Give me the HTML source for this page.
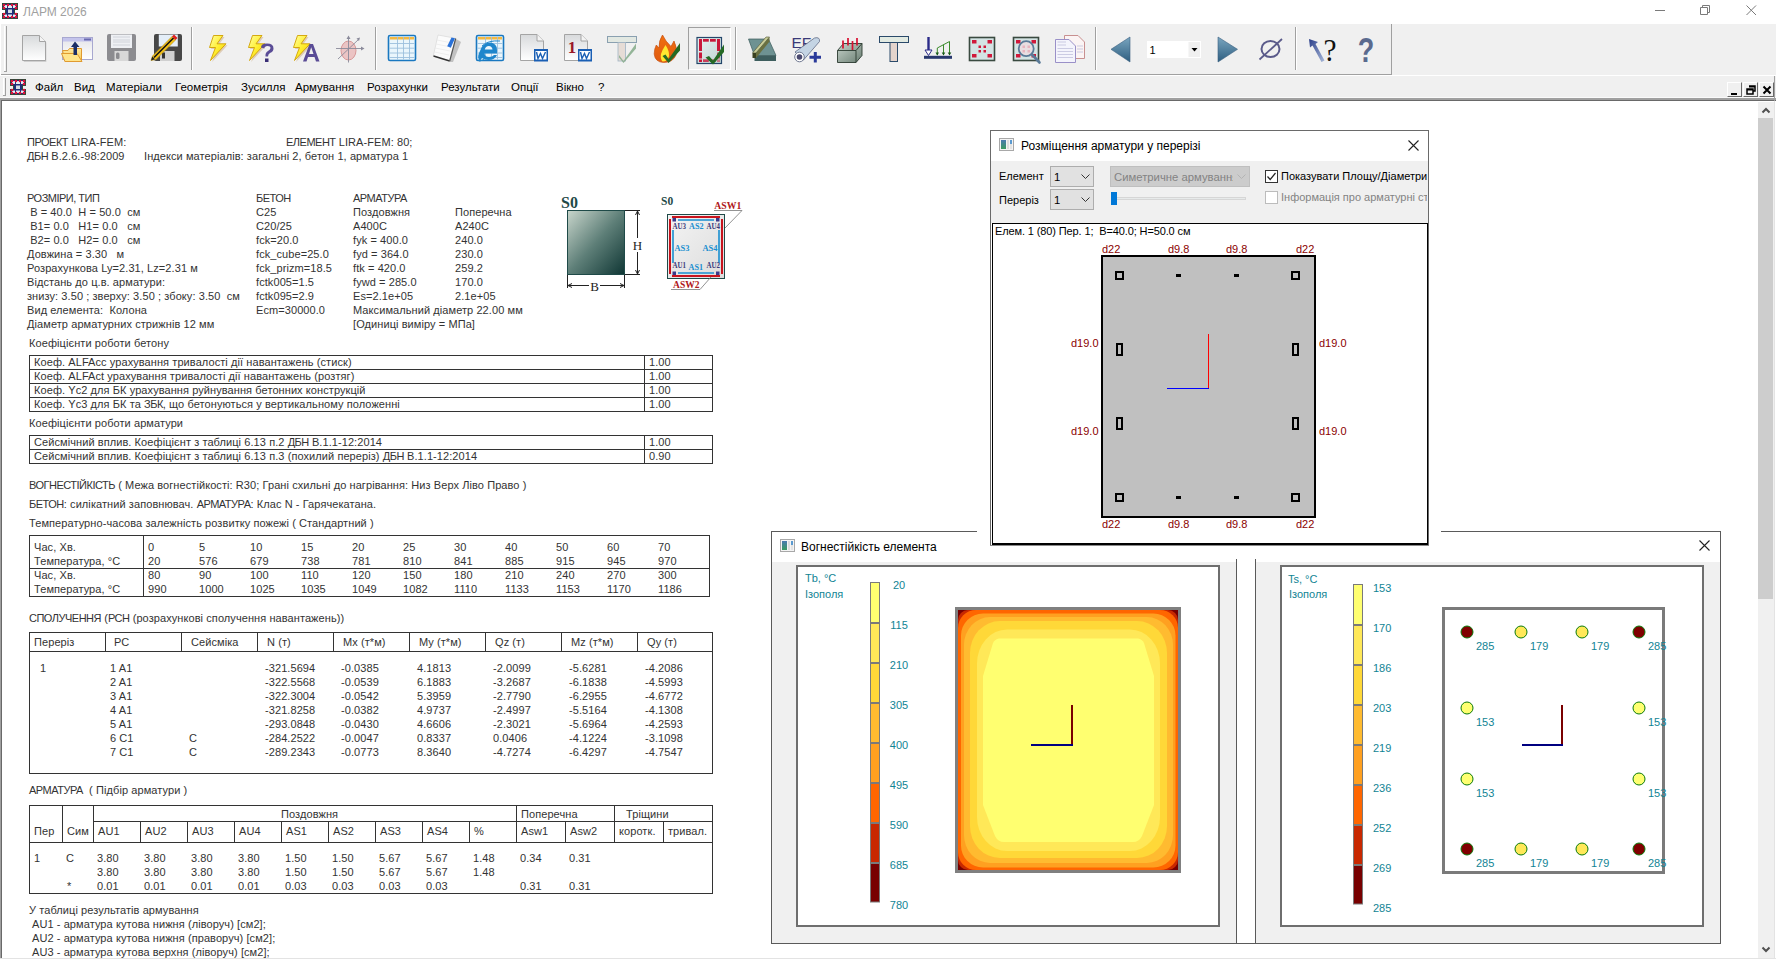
<!DOCTYPE html><html><head><meta charset="utf-8"><style>
html,body{margin:0;padding:0}
body{width:1776px;height:960px;position:relative;overflow:hidden;background:#fff;font-family:"Liberation Sans",sans-serif}
.a{position:absolute}
.t{position:absolute;white-space:pre}
svg{position:absolute;overflow:visible}
</style></head><body>
<div class="a" style="left:0px;top:0px;width:1776px;height:24px;background:#fff"></div>
<svg style="left:2px;top:3px" width="16" height="16" viewBox="0 0 16 16">
<path d="M0 0 H16 V7 H13 V10 H16 V16 H0 V10 H3 V7 H0 Z" fill="#2f4a3a"/>
<path d="M1 1 H15 V6 H12 V11 H15 V15 H1 V11 H4 V6 H1 Z" fill="#1e2f7a"/>
<g fill="#e6eef4"><rect x="2" y="2" width="3" height="3"/><rect x="6" y="2" width="4" height="3"/><rect x="11" y="2" width="3" height="3"/>
<rect x="6" y="6.5" width="4" height="3.5" fill="#d6dee6"/>
<rect x="2" y="11.5" width="3" height="2.5"/><rect x="6" y="11.5" width="4" height="2.5"/><rect x="11" y="11.5" width="3" height="2.5"/></g>
<g fill="#e0103a"><circle cx="2" cy="2" r="1.3"/><circle cx="6" cy="2" r="1.3"/><circle cx="10" cy="2" r="1.3"/><circle cx="14" cy="2" r="1.3"/>
<circle cx="2" cy="5" r="1.3"/><circle cx="14" cy="5" r="1.3"/><circle cx="2" cy="11" r="1.3"/><circle cx="14" cy="11" r="1.3"/>
<circle cx="2" cy="14" r="1.3"/><circle cx="6" cy="14" r="1.3"/><circle cx="10" cy="14" r="1.3"/><circle cx="14" cy="14" r="1.3"/></g>
</svg>
<div class="t" style="left:23px;top:6px;font-size:12px;line-height:12px;color:#a0a0a0;font-weight:normal;font-family:'Liberation Sans';">ЛАРМ 2026</div>
<div class="a" style="left:1655px;top:10px;width:10px;height:1px;background:#7a7a7a"></div>
<svg style="left:1700px;top:5px" width="11" height="11"><path d="M2.5 2.5 V0.5 H9.5 V7.5 H7.5 M0.5 2.5 H7.5 V9.5 H0.5 Z" fill="none" stroke="#7a7a7a" stroke-width="1"/></svg>
<svg style="left:1746px;top:5px" width="11" height="11"><path d="M0.5 0.5 L10 10 M10 0.5 L0.5 10" stroke="#7a7a7a" stroke-width="1"/></svg>
<div class="a" style="left:1px;top:24px;width:1775px;height:51px;background:#f0f0f0"></div>
<div class="a" style="left:1px;top:74px;width:1391px;height:1px;background:#a0a0a0"></div>
<div class="a" style="left:0px;top:75px;width:1776px;height:1px;background:#fff"></div>
<div class="a" style="left:4px;top:26px;width:1px;height:46px;background:#fff"></div>
<div class="a" style="left:6px;top:26px;width:1px;height:46px;background:#a0a0a0"></div>
<div class="a" style="left:4px;top:71px;width:3px;height:1px;background:#a0a0a0"></div>
<div class="a" style="left:191px;top:27px;width:1px;height:43px;background:#a0a0a0"></div>
<div class="a" style="left:192px;top:27px;width:1px;height:43px;background:#fff"></div>
<div class="a" style="left:375px;top:27px;width:1px;height:43px;background:#a0a0a0"></div>
<div class="a" style="left:376px;top:27px;width:1px;height:43px;background:#fff"></div>
<div class="a" style="left:735px;top:27px;width:1px;height:43px;background:#a0a0a0"></div>
<div class="a" style="left:736px;top:27px;width:1px;height:43px;background:#fff"></div>
<div class="a" style="left:1095px;top:27px;width:1px;height:43px;background:#a0a0a0"></div>
<div class="a" style="left:1096px;top:27px;width:1px;height:43px;background:#fff"></div>
<div class="a" style="left:1295px;top:27px;width:1px;height:43px;background:#a0a0a0"></div>
<div class="a" style="left:1296px;top:27px;width:1px;height:43px;background:#fff"></div>
<div class="a" style="left:1391px;top:24px;width:1px;height:50px;background:#a0a0a0"></div>
<div class="a" style="left:688px;top:27px;width:43px;height:43px;border:1px solid #a0a0a0;border-right-color:#fff;border-bottom-color:#fff;box-sizing:border-box;background:#f0f0f0"></div>
<svg style="left:0px;top:24px" width="1400" height="50" viewBox="0 24 1400 50">
<defs>
<linearGradient id="gpage" x1="0" y1="0" x2="0" y2="1"><stop offset="0" stop-color="#d8dadc"/><stop offset="1" stop-color="#ffffff"/></linearGradient>
<linearGradient id="gwin" x1="0" y1="0" x2="0" y2="1"><stop offset="0" stop-color="#e4e4e8"/><stop offset="1" stop-color="#ffffff"/></linearGradient>
<linearGradient id="gfold" x1="0" y1="0" x2="0" y2="1"><stop offset="0" stop-color="#ffe9a0"/><stop offset="1" stop-color="#f6c850"/></linearGradient>
<linearGradient id="gbolt" x1="0" y1="0" x2="1" y2="1"><stop offset="0" stop-color="#ffffa0"/><stop offset="0.5" stop-color="#ffee30"/><stop offset="1" stop-color="#f0c000"/></linearGradient>
<linearGradient id="garrow" x1="0" y1="0" x2="0" y2="1"><stop offset="0" stop-color="#7aa6c0"/><stop offset="1" stop-color="#2e5e80"/></linearGradient>
<linearGradient id="gbox" x1="0" y1="0" x2="1" y2="1"><stop offset="0" stop-color="#c8d4cc"/><stop offset="1" stop-color="#6a7e72"/></linearGradient>
<linearGradient id="gframe" x1="0" y1="0" x2="1" y2="1"><stop offset="0" stop-color="#e8f0f0"/><stop offset="1" stop-color="#c0d4d4"/></linearGradient>
<linearGradient id="gflame" x1="0" y1="0" x2="0" y2="1"><stop offset="0" stop-color="#f07010"/><stop offset="1" stop-color="#e05a10"/></linearGradient>
</defs>
<!-- 1 new doc -->
<path d="M23 36 H39.5 L45.5 42 V61 H23 Z" fill="#9a9a9a" transform="translate(0.8,0.8)" opacity="0.5"/>
<path d="M22.5 35.5 H39.5 L45.5 41.5 V60.5 H22.5 Z" fill="url(#gpage)" stroke="#a4a4a4"/>
<path d="M39.5 35.5 V41.5 H45.5" fill="#f4f4f4" stroke="#a4a4a4"/>
<!-- 2 open -->
<rect x="62.5" y="37.5" width="30" height="22" fill="url(#gwin)" stroke="#a8a8d0"/>
<rect x="63" y="38" width="29" height="3.5" fill="#c4c4ec"/>
<rect x="84" y="38.5" width="7" height="2" fill="#6a6ab0"/>
<path d="M62.5 50.5 H68 L69.5 48.5 H81.5 V61.5 H65 Z" fill="url(#gfold)" stroke="#e09a30"/>
<path d="M61.5 53.5 H77 L82 61.5 H65 Z" fill="#ffe48a" stroke="#e09a30"/>
<path d="M71 47 L75 41.5 L79.5 47 H77 V55 H73.5 V47 Z" fill="#1c2e66"/>
<!-- 3 save -->
<rect x="107" y="34" width="29" height="27" rx="2" fill="#8c8c90"/>
<rect x="111" y="34.5" width="21" height="13.5" fill="#eef0f4"/>
<path d="M113 37 H130 M113 40 H130 M113 42 H130 M113 45 H130" stroke="#c8ccd4" stroke-width="0.8"/>
<rect x="114.5" y="51" width="14" height="10" fill="#d8d8d8"/>
<rect x="116" y="52.5" width="3.5" height="6.5" rx="1.5" fill="#8c8c90"/>
<!-- 4 save as -->
<rect x="154" y="34" width="28" height="27" rx="2" fill="#474747"/>
<rect x="158.8" y="34.5" width="19" height="12" fill="#e4eef8"/>
<rect x="160" y="51" width="14.5" height="10" fill="#d0d0d0"/>
<rect x="162" y="52.5" width="3" height="6" fill="#333"/>
<path d="M151 60.5 L152.5 56 L172 36.5 L175.5 40 L156 59.5 Z" fill="#f2c018" stroke="#b08a10" stroke-width="0.6"/>
<path d="M154 57.5 L173.5 38" stroke="#111" stroke-width="1.6"/>
<path d="M172 36.5 L174 34.5 L177.5 38 L175.5 40 Z" fill="#e02020"/>
<path d="M151 60.5 L152.3 56.5 L155 59.3 Z" fill="#222"/>
<!-- 5,6,7 bolts -->
<g id="bolt"><path d="M213.5 35.5 H223 L217 43.8 H226 L210.5 60.5 L215.5 47.5 H209.5 Z" fill="#c8a070" opacity="0.45" transform="translate(1.5,1.5)"/>
<path d="M213.5 35.5 H223 L217 43.8 H226 L210.5 60.5 L215.5 47.5 H209.5 Z" fill="url(#gbolt)" stroke="#d0a000" stroke-width="0.9"/></g>
<use href="#bolt" x="39" y="0"/>
<use href="#bolt" x="84" y="0"/>
<path d="M261 47.5 Q261 43.5 267 43.5 Q273.5 43.5 273.5 48.5 Q273.5 51.5 270 53 Q268 54 268 56.5 H265.5 Q265 52.5 268 51 Q270.5 49.5 270.5 48 Q270.5 46 267.5 46 Q264.5 46 264.3 48.5 Z" fill="#5a4c96"/>
<rect x="265" y="58.5" width="3.5" height="3.5" fill="#3a2e76"/>
<path d="M303 61.5 L309.5 44 H313 L319.5 61.5 H316 L314.5 57 H308 L306.5 61.5 Z M309 54 H313.5 L311.2 47.2 Z" fill="#5a4c96" fill-rule="evenodd"/>
<!-- 8 sphere -->
<ellipse cx="348.5" cy="50.5" rx="7.5" ry="9.5" fill="#ebc4c4" stroke="#d49090" stroke-width="0.9"/>
<path d="M348.5 37 V62.5 M336 48.5 H363 M338 59 L359 39" stroke="#8a8a9a" stroke-width="0.9"/>
<path d="M346.5 39 L348.5 35.5 L350.5 39 Z M361 46.5 L364.5 48.5 L361 50.5 Z M356.5 38.5 L360 37.5 L359 41 Z" fill="#8a8a9a"/>
<!-- 9 table -->
<g id="tbl"><rect x="388.5" y="35.5" width="27" height="25" rx="1.5" fill="#eaf6fc" stroke="#1a78c0" stroke-width="1.6"/>
<rect x="390" y="37" width="24" height="2.5" fill="#f4b840"/>
<path d="M397.5 37 V59.5 M403.5 37 V59.5 M409.5 37 V59.5 M389.5 43.5 H414.5 M389.5 48.2 H414.5 M389.5 53 H414.5 M389.5 57.5 H414.5" stroke="#9cc0dc" stroke-width="0.9"/></g>
<!-- 10 notebook -->
<path d="M439 36 L457 39.5 L461 42 L453 62 L450 62 Z" fill="#9a9a9a" opacity="0.55"/>
<path d="M438 35 L455.7 38.3 L449.7 61 L433.3 56 Z" fill="#fbfbfb" stroke="#d4d4d4" stroke-width="0.6"/>
<path d="M433.5 56 L449.7 61" stroke="#333" stroke-width="1.4"/>
<path d="M455.7 38.5 L449.7 61" stroke="#555" stroke-width="1.2"/>
<path d="M437 40 L452 43 M436 44 L451 47 M435 48 L450 51 M434.5 52 L449 55" stroke="#e8e8e8" stroke-width="0.7"/>
<path d="M451.5 37.6 L455 38.3 L450.8 47.8 L447.2 46.2 Z" fill="#2a72d8"/>
<!-- 11 IE table -->
<use href="#tbl" x="88" y="0"/>
<path d="M479 60 Q477 56 480 51 Q482 43 490 42.5 Q497 43 497 50 V53.5 H484.5 Q485 57 489 57 Q492.5 57 494 55 H497 Q495 60 488.5 60 Q484 60 482 58 Q480.5 61 479 60 Z" fill="#1e86cc"/>
<path d="M484.8 49.5 Q485.5 46 488.8 46 Q492 46 492.5 49.5 Z" fill="#eaf6fc"/>
<path d="M480 58.5 Q476 63 484 59.5 M482 46 Q488 40 500 41" fill="none" stroke="#1e86cc" stroke-width="1"/>
<!-- 12 word doc -->
<g id="wdoc"><path d="M520.5 34.5 H537 L543.5 41 V60.5 H520.5 Z" fill="url(#gpage)" stroke="#a4a4a4"/>
<path d="M537 34.5 V41 H543.5" fill="#f4f4f4" stroke="#a4a4a4"/>
<rect x="534" y="49" width="14" height="12.5" fill="#1a5fb4"/>
<rect x="535.5" y="51" width="11" height="8.5" fill="#fff"/>
<path d="M536.5 52 L538 58.5 L540.5 53.5 L542.5 58.5 L545.5 52" fill="none" stroke="#1a5fb4" stroke-width="1.4"/></g>
<!-- 13 1W -->
<use href="#wdoc" x="44" y="0"/>
<text x="572" y="53" font-family="Liberation Serif" font-weight="bold" font-size="17" fill="#9a1828" text-anchor="middle">1</text>
<!-- 14 T check faded -->
<rect x="607.5" y="36.5" width="29" height="6" fill="#e2e8e2" stroke="#8aa0b0"/>
<rect x="618" y="42.5" width="7.5" height="18.5" fill="#e6dcd6" stroke="#a0b4c4" stroke-width="0.8"/>
<path d="M619 55 L623.5 61 L636 43.5 L636 48.5 L623.5 63 L619 57.5 Z" fill="#8aae8e" opacity="0.9"/>
<!-- 15 fire -->
<path d="M662.5 35 Q665.5 41.5 671 46.5 L674 41 Q677.5 48 676 55 Q673 62.5 663.5 62.5 Q655 62 654.2 54 Q654.2 49 656.3 45 L659 48 Q658.8 40.5 662.5 35 Z" fill="url(#gflame)" stroke="#c85010" stroke-width="0.7"/>
<path d="M665.5 45 Q669.5 51 669 56 Q667.5 61.5 662.5 61.5 Q660 59 661 54 Q662.5 49.5 665.5 45 Z" fill="#ffe830"/>
<path d="M662.5 56 L665.5 54.5 L668.6 59 L680 43 V50.5 L668.6 63 Z" fill="#256a25"/>
<!-- 16 frame check -->
<rect x="697" y="37.5" width="24.5" height="26" fill="url(#gframe)" stroke="#23466a" stroke-width="1.2"/>
<g fill="#c8183a"><rect x="699" y="39" width="3" height="12"/><rect x="699" y="52.5" width="3" height="6"/><rect x="699" y="59.5" width="3" height="2.5"/>
<rect x="717" y="39" width="3" height="12"/><rect x="717" y="52.5" width="3" height="6" opacity="0.7"/><rect x="717" y="59.5" width="3" height="2.5" opacity="0.5"/>
<rect x="703" y="39" width="5.8" height="2.7"/><rect x="710" y="39" width="5.8" height="2.7"/>
<rect x="703" y="59.3" width="5.8" height="2.7" opacity="0.8"/><rect x="710" y="59.3" width="5.8" height="2.7" opacity="0.6"/></g>
<path d="M705.5 57.5 L709 56 L713 60.5 L724 44.5 V52 L713 64.5 Z" fill="#256a25"/>
<!-- 17 slab -->
<path d="M748.5 39 H768.5 L776 55.5 H754.5 Z" fill="#6e9292" stroke="#3a5a5a" stroke-width="0.7"/>
<rect x="754.5" y="55.5" width="21.5" height="5.5" fill="#3e5e5e"/>
<path d="M752.5 53 L766 37 H769.5 L756 53 Z" fill="#c8cc98" stroke="#4a5030" stroke-width="0.6"/>
<path d="M756 53 L769.5 37 V41.5 L756 58 Z" fill="#6a7040"/>
<rect x="752.5" y="53" width="3.5" height="5" fill="#3a4020"/>
<!-- 18 EF pipe -->
<text x="791.5" y="47.8" font-family="Liberation Sans" font-size="15.5" fill="#3a3a78">EF</text>
<path d="M795 52 L814.5 38 Q820 36.5 819.5 41.5 L803.5 60 Z" fill="#c4d4e4" stroke="#606a84" stroke-width="0.8"/>
<circle cx="799.5" cy="57" r="4.8" fill="#fff" stroke="#606a84" stroke-width="0.9"/>
<circle cx="799.5" cy="57" r="2.8" fill="#4a4a70"/>
<path d="M809.5 57.2 H821 M815.3 52 V62.5" stroke="#2a3a9a" stroke-width="3"/>
<!-- 19 box with sticks -->
<path d="M837.5 50.5 L843.5 43.5 H862 V55.5 L856 62.5 H837.5 Z" fill="url(#gbox)" stroke="#2a3a30" stroke-width="0.9"/>
<path d="M837.5 50.5 H856 V62.5 M856 50.5 L862 43.5" fill="none" stroke="#2a3a30" stroke-width="0.9"/>
<path d="M843 40.5 V48.5 M848 38 V45.5 M852.5 41 V50 M857 38 V45.5" stroke="#d81030" stroke-width="1.7"/>
<!-- 20 T -->
<rect x="879.5" y="36.5" width="29" height="6" fill="#e2eae2" stroke="#2a4a6a"/>
<rect x="890" y="42.5" width="7.5" height="19" fill="#e4d4cc" stroke="#2a4a6a"/>
<!-- 21 loads -->
<rect x="924" y="55.8" width="28" height="3" fill="#28386e"/>
<path d="M928.5 37 V51" stroke="#2a2a88" stroke-width="2.4"/>
<path d="M925 50 L928.5 55.5 L932 50 Z" fill="#fff" stroke="#2a2a88" stroke-width="1"/>
<path d="M937.3 55 V48 L949.5 41.5 V55 M943.5 55 V44.8" fill="none" stroke="#3a8a2a" stroke-width="1"/>
<path d="M935.5 52.5 L937.3 55.5 L939 52.5 Z M941.7 52.5 L943.5 55.5 L945.3 52.5 Z M947.7 52.5 L949.5 55.5 L951.3 52.5 Z" fill="#1a5a1a"/>
<!-- 22 red squares frame -->
<g id="rsq"><rect x="969.5" y="37.5" width="25" height="23" fill="#d4e4e4" stroke="#3a4a40" stroke-width="1.6"/>
<g fill="#d0183a"><rect x="972" y="40" width="4.5" height="3.5"/><rect x="987.5" y="40" width="4.5" height="3.5"/><rect x="972" y="54" width="4.5" height="3.5"/><rect x="987.5" y="54" width="4.5" height="3.5"/>
<rect x="978.5" y="45.5" width="2.5" height="2.5"/><rect x="983.5" y="45.5" width="2.5" height="2.5"/><rect x="978.5" y="50" width="2.5" height="2.5"/><rect x="983.5" y="50" width="2.5" height="2.5"/></g></g>
<!-- 23 magnifier -->
<use href="#rsq" x="44" y="0"/>
<circle cx="1026.2" cy="48.7" r="7.5" fill="#ecdce0" fill-opacity="0.8" stroke="#5a7a98" stroke-width="1.8"/>
<path d="M1032 54.5 L1039.5 62.5" stroke="#5a7a98" stroke-width="2.6" stroke-linecap="round"/>
<!-- 24 copy docs -->
<path d="M1064.5 35.5 H1078 L1084.5 42 V58.5 H1064.5 Z" fill="#fbf4f4" stroke="#c89090"/>
<path d="M1055.5 39.5 H1069 L1075.5 46 V62.5 H1055.5 Z" fill="#f4f4fc" stroke="#9a90c8"/>
<path d="M1057.5 42 H1066 M1057.5 45 H1066 M1057.5 48.5 H1073 M1057.5 51.5 H1073 M1057.5 54.5 H1073 M1057.5 57.5 H1073 M1077 46 H1083 M1077 49 H1083 M1077 52 H1083" stroke="#c0c0dc" stroke-width="0.8"/>
<!-- 25 left arrow -->
<path d="M1111 49.3 L1130 37 V62 Z" fill="url(#garrow)" stroke="#3a6080" stroke-width="0.6"/>
<!-- combo -->
<rect x="1147" y="41" width="54" height="17" fill="#fff"/>
<rect x="1188.5" y="42" width="11.5" height="15" fill="#f0f0f0"/>
<path d="M1191.5 48 H1197.5 L1194.5 51.5 Z" fill="#000"/>
<text x="1149.5" y="54.3" font-family="Liberation Sans" font-size="11" fill="#000">1</text>
<!-- 27 right arrow -->
<path d="M1237.5 49.3 L1218 37 V62 Z" fill="url(#garrow)" stroke="#3a6080" stroke-width="0.6"/>
<!-- 28 diameter -->
<ellipse cx="1270.5" cy="49" rx="9" ry="8" fill="none" stroke="#5a5a8a" stroke-width="2"/>
<path d="M1259.5 59.5 L1282 39" stroke="#5a5a8a" stroke-width="1.8"/>
<!-- 29 arrow ? -->
<defs><linearGradient id="gar2" x1="0" y1="0" x2="1" y2="1"><stop offset="0" stop-color="#2a3e8a"/><stop offset="1" stop-color="#a8b8d8"/></linearGradient></defs>
<path d="M1309 39 L1318 42 L1315.5 44 L1324.5 60.5 L1321.5 62 L1312.5 45.5 L1310 47.5 Z" fill="url(#gar2)"/>
<text x="1330" y="60.5" font-family="Liberation Serif" font-size="31" fill="#111" text-anchor="middle" textLength="13" lengthAdjust="spacingAndGlyphs">?</text>
<!-- 30 ? -->
<text x="1366" y="61.5" font-family="Liberation Sans" font-weight="bold" font-size="35" fill="#5a6a8e" text-anchor="middle" textLength="16.5" lengthAdjust="spacingAndGlyphs">?</text>
</svg>
<div class="a" style="left:0px;top:76px;width:1776px;height:22px;background:#f0f0f0"></div>
<div class="a" style="left:3px;top:78px;width:1px;height:17px;background:#fff"></div>
<div class="a" style="left:5px;top:78px;width:1px;height:18px;background:#a0a0a0"></div>
<div class="a" style="left:3px;top:95px;width:3px;height:1px;background:#a0a0a0"></div>
<svg style="left:10px;top:79px" width="16" height="16" viewBox="0 0 16 16">
<path d="M0 0 H16 V7 H13 V10 H16 V16 H0 V10 H3 V7 H0 Z" fill="#2f4a3a"/>
<path d="M1 1 H15 V6 H12 V11 H15 V15 H1 V11 H4 V6 H1 Z" fill="#1e2f7a"/>
<g fill="#e6eef4"><rect x="2" y="2" width="3" height="3"/><rect x="6" y="2" width="4" height="3"/><rect x="11" y="2" width="3" height="3"/>
<rect x="6" y="6.5" width="4" height="3.5" fill="#d6dee6"/>
<rect x="2" y="11.5" width="3" height="2.5"/><rect x="6" y="11.5" width="4" height="2.5"/><rect x="11" y="11.5" width="3" height="2.5"/></g>
<g fill="#e0103a"><circle cx="2" cy="2" r="1.3"/><circle cx="6" cy="2" r="1.3"/><circle cx="10" cy="2" r="1.3"/><circle cx="14" cy="2" r="1.3"/>
<circle cx="2" cy="5" r="1.3"/><circle cx="14" cy="5" r="1.3"/><circle cx="2" cy="11" r="1.3"/><circle cx="14" cy="11" r="1.3"/>
<circle cx="2" cy="14" r="1.3"/><circle cx="6" cy="14" r="1.3"/><circle cx="10" cy="14" r="1.3"/><circle cx="14" cy="14" r="1.3"/></g>
</svg>
<div class="t" style="left:35px;top:82px;font-size:11.5px;line-height:11.5px;color:#000;font-weight:normal;font-family:'Liberation Sans';">Файл</div>
<div class="t" style="left:74px;top:82px;font-size:11.5px;line-height:11.5px;color:#000;font-weight:normal;font-family:'Liberation Sans';">Вид</div>
<div class="t" style="left:106px;top:82px;font-size:11.5px;line-height:11.5px;color:#000;font-weight:normal;font-family:'Liberation Sans';">Матеріали</div>
<div class="t" style="left:175px;top:82px;font-size:11.5px;line-height:11.5px;color:#000;font-weight:normal;font-family:'Liberation Sans';">Геометрія</div>
<div class="t" style="left:241px;top:82px;font-size:11.5px;line-height:11.5px;color:#000;font-weight:normal;font-family:'Liberation Sans';">Зусилля</div>
<div class="t" style="left:295px;top:82px;font-size:11.5px;line-height:11.5px;color:#000;font-weight:normal;font-family:'Liberation Sans';">Армування</div>
<div class="t" style="left:367px;top:82px;font-size:11.5px;line-height:11.5px;color:#000;font-weight:normal;font-family:'Liberation Sans';">Розрахунки</div>
<div class="t" style="left:441px;top:82px;font-size:11.5px;line-height:11.5px;color:#000;font-weight:normal;font-family:'Liberation Sans';">Результати</div>
<div class="t" style="left:511px;top:82px;font-size:11.5px;line-height:11.5px;color:#000;font-weight:normal;font-family:'Liberation Sans';">Опції</div>
<div class="t" style="left:556px;top:82px;font-size:11.5px;line-height:11.5px;color:#000;font-weight:normal;font-family:'Liberation Sans';">Вікно</div>
<div class="t" style="left:598px;top:82px;font-size:11.5px;line-height:11.5px;color:#000;font-weight:normal;font-family:'Liberation Sans';">?</div>
<div class="a" style="left:1727px;top:82px;width:15px;height:15px;background:#f0f0f0;border:1px solid;border-color:#fff #696969 #696969 #fff;box-sizing:border-box"></div>
<div class="a" style="left:1743px;top:82px;width:15px;height:15px;background:#f0f0f0;border:1px solid;border-color:#fff #696969 #696969 #fff;box-sizing:border-box"></div>
<div class="a" style="left:1759px;top:82px;width:15px;height:15px;background:#f0f0f0;border:1px solid;border-color:#fff #696969 #696969 #fff;box-sizing:border-box"></div>
<div class="a" style="left:1731px;top:93px;width:6px;height:2px;background:#000"></div>
<svg style="left:1746px;top:85px" width="10" height="10"><path d="M3 1 H9 V6 H7 M1 4 H7 V9 H1 Z" fill="none" stroke="#000" stroke-width="1.5"/><rect x="3" y="1" width="6" height="1.5" fill="#000"/><rect x="1" y="4" width="6" height="1.5" fill="#000"/></svg>
<svg style="left:1762px;top:85px" width="10" height="10"><path d="M1.5 1.5 L8.5 8.5 M8.5 1.5 L1.5 8.5" stroke="#000" stroke-width="2"/></svg>
<div class="a" style="left:0px;top:97px;width:1776px;height:1px;background:#fafafa"></div>
<div class="a" style="left:0px;top:98px;width:1776px;height:2px;background:#a0a0a0"></div>
<div class="a" style="left:0px;top:100px;width:1776px;height:1px;background:#696969"></div>
<div class="a" style="left:1774px;top:76px;width:1px;height:25px;background:#a0a0a0"></div>
<div class="a" style="left:0px;top:98px;width:1px;height:860px;background:#a0a0a0"></div>
<div class="a" style="left:1px;top:100px;width:1px;height:858px;background:#696969"></div>
<div class="a" style="left:0px;top:958px;width:1776px;height:1px;background:#e3e3e3"></div>
<div class="a" style="left:0px;top:959px;width:1776px;height:1px;background:#fff"></div>
<div class="a" style="left:1758px;top:102px;width:16px;height:856px;background:#f0f0f0"></div>
<div class="a" style="left:1774px;top:101px;width:1px;height:858px;background:#e3e3e3"></div>
<svg style="left:1761px;top:106px" width="10" height="8"><path d="M1.5 6.5 L5 3 L8.5 6.5" fill="none" stroke="#505050" stroke-width="2"/></svg>
<div class="a" style="left:1758px;top:118px;width:15px;height:481px;background:#cdcdcd"></div>
<svg style="left:1761px;top:946px" width="10" height="8"><path d="M1.5 1.5 L5 5 L8.5 1.5" fill="none" stroke="#505050" stroke-width="2"/></svg>
<div class="t" style="left:27px;top:137px;font-size:11px;line-height:11px;color:#333;font-weight:normal;font-family:'Liberation Sans';letter-spacing:0.08px;"><span style="letter-spacing:-0.5px">ПРОЕКТ</span> LIRA-FEM:</div>
<div class="t" style="left:286px;top:137px;font-size:11px;line-height:11px;color:#333;font-weight:normal;font-family:'Liberation Sans';letter-spacing:0.08px;"><span style="letter-spacing:-0.5px">ЕЛЕМЕНТ</span> LIRA-FEM: 80;</div>
<div class="t" style="left:27px;top:151px;font-size:11px;line-height:11px;color:#333;font-weight:normal;font-family:'Liberation Sans';letter-spacing:0.08px;"><span style="letter-spacing:-0.5px">ДБН</span> В.2.6.-98:2009</div>
<div class="t" style="left:144px;top:151px;font-size:11px;line-height:11px;color:#333;font-weight:normal;font-family:'Liberation Sans';letter-spacing:0.08px;">Індекси матеріалів: загальні 2, бетон 1, арматура 1</div>
<div class="t" style="left:27px;top:193px;font-size:11px;line-height:11px;color:#333;font-weight:normal;font-family:'Liberation Sans';letter-spacing:0.08px;"><span style="letter-spacing:-0.5px">РОЗМІРИ, ТИП</span></div>
<div class="t" style="left:27px;top:207px;font-size:11px;line-height:11px;color:#333;font-weight:normal;font-family:'Liberation Sans';letter-spacing:0.08px;"> B = 40.0  H = 50.0  см</div>
<div class="t" style="left:27px;top:221px;font-size:11px;line-height:11px;color:#333;font-weight:normal;font-family:'Liberation Sans';letter-spacing:0.08px;"> B1= 0.0   H1= 0.0   см</div>
<div class="t" style="left:27px;top:235px;font-size:11px;line-height:11px;color:#333;font-weight:normal;font-family:'Liberation Sans';letter-spacing:0.08px;"> B2= 0.0   H2= 0.0   см</div>
<div class="t" style="left:27px;top:249px;font-size:11px;line-height:11px;color:#333;font-weight:normal;font-family:'Liberation Sans';letter-spacing:0.08px;">Довжина = 3.30   м</div>
<div class="t" style="left:27px;top:263px;font-size:11px;line-height:11px;color:#333;font-weight:normal;font-family:'Liberation Sans';letter-spacing:0.08px;">Розрахункова Ly=2.31, Lz=2.31 м</div>
<div class="t" style="left:27px;top:277px;font-size:11px;line-height:11px;color:#333;font-weight:normal;font-family:'Liberation Sans';letter-spacing:0.08px;">Відстань до ц.в. арматури:</div>
<div class="t" style="left:27px;top:291px;font-size:11px;line-height:11px;color:#333;font-weight:normal;font-family:'Liberation Sans';letter-spacing:0.08px;">знизу: 3.50 ; зверху: 3.50 ; збоку: 3.50  см</div>
<div class="t" style="left:27px;top:305px;font-size:11px;line-height:11px;color:#333;font-weight:normal;font-family:'Liberation Sans';letter-spacing:0.08px;">Вид елемента:  Колона</div>
<div class="t" style="left:27px;top:319px;font-size:11px;line-height:11px;color:#333;font-weight:normal;font-family:'Liberation Sans';letter-spacing:0.08px;">Діаметр арматурних стрижнів 12 мм</div>
<div class="t" style="left:256px;top:193px;font-size:11px;line-height:11px;color:#333;font-weight:normal;font-family:'Liberation Sans';letter-spacing:0.08px;"><span style="letter-spacing:-0.5px">БЕТОН</span></div>
<div class="t" style="left:256px;top:207px;font-size:11px;line-height:11px;color:#333;font-weight:normal;font-family:'Liberation Sans';letter-spacing:0.08px;">C25</div>
<div class="t" style="left:256px;top:221px;font-size:11px;line-height:11px;color:#333;font-weight:normal;font-family:'Liberation Sans';letter-spacing:0.08px;">C20/25</div>
<div class="t" style="left:256px;top:235px;font-size:11px;line-height:11px;color:#333;font-weight:normal;font-family:'Liberation Sans';letter-spacing:0.08px;">fck=20.0</div>
<div class="t" style="left:256px;top:249px;font-size:11px;line-height:11px;color:#333;font-weight:normal;font-family:'Liberation Sans';letter-spacing:0.08px;">fck_cube=25.0</div>
<div class="t" style="left:256px;top:263px;font-size:11px;line-height:11px;color:#333;font-weight:normal;font-family:'Liberation Sans';letter-spacing:0.08px;">fck_prizm=18.5</div>
<div class="t" style="left:256px;top:277px;font-size:11px;line-height:11px;color:#333;font-weight:normal;font-family:'Liberation Sans';letter-spacing:0.08px;">fctk005=1.5</div>
<div class="t" style="left:256px;top:291px;font-size:11px;line-height:11px;color:#333;font-weight:normal;font-family:'Liberation Sans';letter-spacing:0.08px;">fctk095=2.9</div>
<div class="t" style="left:256px;top:305px;font-size:11px;line-height:11px;color:#333;font-weight:normal;font-family:'Liberation Sans';letter-spacing:0.08px;">Ecm=30000.0</div>
<div class="t" style="left:353px;top:193px;font-size:11px;line-height:11px;color:#333;font-weight:normal;font-family:'Liberation Sans';letter-spacing:0.08px;"><span style="letter-spacing:-0.5px">АРМАТУРА</span></div>
<div class="t" style="left:353px;top:207px;font-size:11px;line-height:11px;color:#333;font-weight:normal;font-family:'Liberation Sans';letter-spacing:0.08px;">Поздовжня</div>
<div class="t" style="left:353px;top:221px;font-size:11px;line-height:11px;color:#333;font-weight:normal;font-family:'Liberation Sans';letter-spacing:0.08px;">A400C</div>
<div class="t" style="left:353px;top:235px;font-size:11px;line-height:11px;color:#333;font-weight:normal;font-family:'Liberation Sans';letter-spacing:0.08px;">fyk = 400.0</div>
<div class="t" style="left:353px;top:249px;font-size:11px;line-height:11px;color:#333;font-weight:normal;font-family:'Liberation Sans';letter-spacing:0.08px;">fyd = 364.0</div>
<div class="t" style="left:353px;top:263px;font-size:11px;line-height:11px;color:#333;font-weight:normal;font-family:'Liberation Sans';letter-spacing:0.08px;">ftk = 420.0</div>
<div class="t" style="left:353px;top:277px;font-size:11px;line-height:11px;color:#333;font-weight:normal;font-family:'Liberation Sans';letter-spacing:0.08px;">fywd = 285.0</div>
<div class="t" style="left:353px;top:291px;font-size:11px;line-height:11px;color:#333;font-weight:normal;font-family:'Liberation Sans';letter-spacing:0.08px;">Es=2.1e+05</div>
<div class="t" style="left:353px;top:305px;font-size:11px;line-height:11px;color:#333;font-weight:normal;font-family:'Liberation Sans';letter-spacing:0.08px;">Максимальний діаметр 22.00 мм</div>
<div class="t" style="left:353px;top:319px;font-size:11px;line-height:11px;color:#333;font-weight:normal;font-family:'Liberation Sans';letter-spacing:0.08px;">[Одиниці виміру = МПа]</div>
<div class="t" style="left:455px;top:207px;font-size:11px;line-height:11px;color:#333;font-weight:normal;font-family:'Liberation Sans';letter-spacing:0.08px;">Поперечна</div>
<div class="t" style="left:455px;top:221px;font-size:11px;line-height:11px;color:#333;font-weight:normal;font-family:'Liberation Sans';letter-spacing:0.08px;">A240C</div>
<div class="t" style="left:455px;top:235px;font-size:11px;line-height:11px;color:#333;font-weight:normal;font-family:'Liberation Sans';letter-spacing:0.08px;">240.0</div>
<div class="t" style="left:455px;top:249px;font-size:11px;line-height:11px;color:#333;font-weight:normal;font-family:'Liberation Sans';letter-spacing:0.08px;">230.0</div>
<div class="t" style="left:455px;top:263px;font-size:11px;line-height:11px;color:#333;font-weight:normal;font-family:'Liberation Sans';letter-spacing:0.08px;">259.2</div>
<div class="t" style="left:455px;top:277px;font-size:11px;line-height:11px;color:#333;font-weight:normal;font-family:'Liberation Sans';letter-spacing:0.08px;">170.0</div>
<div class="t" style="left:455px;top:291px;font-size:11px;line-height:11px;color:#333;font-weight:normal;font-family:'Liberation Sans';letter-spacing:0.08px;">2.1e+05</div>
<div class="t" style="left:561px;top:195px;font-size:16px;line-height:16px;color:#1f4a48;font-weight:bold;font-family:'Liberation Serif';">S0</div>
<svg style="left:560px;top:205px" width="90" height="90">
<defs><linearGradient id="g1" x1="0" y1="0" x2="1" y2="1"><stop offset="0" stop-color="#c9d6cc"/><stop offset="0.5" stop-color="#5e7f78"/><stop offset="1" stop-color="#0f3634"/></linearGradient></defs>
<rect x="7.5" y="5.5" width="57" height="64" fill="url(#g1)" stroke="#1f4a48" stroke-width="1"/>
<path d="M65 5.5 H80 M65 69.5 H80 M77.5 6 V69 M7.5 70 V83 M64.5 70 V83 M8 80.5 H64" stroke="#222" stroke-width="1" fill="none"/>
<path d="M75.5 10 L77.5 6 L79.5 10 M75.5 65 L77.5 69 L79.5 65 M12 78.5 L8 80.5 L12 82.5 M60 78.5 L64 80.5 L60 82.5" stroke="#222" fill="none" stroke-width="1"/>
<rect x="73" y="33" width="9" height="14" fill="#fff"/><rect x="29" y="75" width="11" height="12" fill="#fff"/>
<text x="77.5" y="45" font-family="Liberation Serif" font-size="13" text-anchor="middle" fill="#222">H</text>
<text x="34.5" y="86" font-family="Liberation Serif" font-size="13" text-anchor="middle" fill="#222">B</text>
</svg>
<div class="t" style="left:661px;top:196px;font-size:11.5px;line-height:11.5px;color:#1f4a48;font-weight:bold;font-family:'Liberation Serif';">S0</div>
<svg style="left:660px;top:195px" width="95" height="100">
<defs><linearGradient id="g2" x1="0" y1="0" x2="1" y2="1"><stop offset="0" stop-color="#f4f4f4"/><stop offset="1" stop-color="#dcdcdc"/></linearGradient></defs>
<rect x="7.5" y="19.5" width="57" height="64" fill="url(#g2)" stroke="#1f4a48" stroke-width="1"/>
<g stroke="#c8141e" stroke-width="2"><path d="M12 22 H60 M12 81 H60 M10 24 V79 M62 24 V79"/></g>
<g stroke="#1a8fd0" stroke-width="1.6"><path d="M18 25 H54 M18 78 H54 M13 35 V68 M59 35 V68"/></g>
<g fill="#3a3a8a"><rect x="12.5" y="23" width="3.5" height="3.5"/><rect x="56" y="23" width="3.5" height="3.5"/><rect x="12.5" y="76.5" width="3.5" height="3.5"/><rect x="56" y="76.5" width="3.5" height="3.5"/></g>
<g font-family="Liberation Serif" font-weight="bold" font-size="8" fill="#3a3a7a" lengthAdjust="spacingAndGlyphs"><text x="12.5" y="34" textLength="13.5" lengthAdjust="spacingAndGlyphs">AU3</text><text x="46.5" y="34" textLength="13.5" lengthAdjust="spacingAndGlyphs">AU4</text><text x="12.5" y="73" textLength="13.5" lengthAdjust="spacingAndGlyphs">AU1</text><text x="46.5" y="73" textLength="13.5" lengthAdjust="spacingAndGlyphs">AU2</text></g>
<g font-family="Liberation Serif" font-weight="bold" font-size="9" fill="#1a8fd0"><text x="29" y="33.5" textLength="14.5" lengthAdjust="spacingAndGlyphs">AS2</text><text x="14.5" y="55.5" textLength="15" lengthAdjust="spacingAndGlyphs">AS3</text><text x="42.5" y="55.5" textLength="15" lengthAdjust="spacingAndGlyphs">AS4</text><text x="28.5" y="74.5" textLength="14.5" lengthAdjust="spacingAndGlyphs">AS1</text></g>
<g font-family="Liberation Serif" font-weight="bold" font-size="10" fill="#b01820"><text x="54.3" y="13.5" textLength="27" lengthAdjust="spacingAndGlyphs">ASW1</text><text x="13" y="92.5" textLength="26.5" lengthAdjust="spacingAndGlyphs">ASW2</text></g>
<path d="M54 15.5 H82 L65 33 M11 94.5 H40 L51 82" stroke="#777" stroke-width="0.8" fill="none"/>
</svg>
<div class="t" style="left:29px;top:338px;font-size:11px;line-height:11px;color:#333;font-weight:normal;font-family:'Liberation Sans';letter-spacing:0.08px;">Коефіцієнти роботи бетону</div>
<div class="a" style="left:29px;top:355px;width:684px;height:57px;border:1px solid #333;box-sizing:border-box;"></div>
<div class="a" style="left:644px;top:355px;width:1px;height:56px;background:#333"></div>
<div class="a" style="left:29px;top:369px;width:683px;height:1px;background:#333"></div>
<div class="a" style="left:29px;top:383px;width:683px;height:1px;background:#333"></div>
<div class="a" style="left:29px;top:397px;width:683px;height:1px;background:#333"></div>
<div class="t" style="left:34px;top:357px;font-size:11px;line-height:11px;color:#333;font-weight:normal;font-family:'Liberation Sans';letter-spacing:0.08px;">Коеф. ALFAcc урахування тривалості дії навантажень (стиск)</div>
<div class="t" style="left:649px;top:357px;font-size:11px;line-height:11px;color:#333;font-weight:normal;font-family:'Liberation Sans';letter-spacing:0.08px;">1.00</div>
<div class="t" style="left:34px;top:371px;font-size:11px;line-height:11px;color:#333;font-weight:normal;font-family:'Liberation Sans';letter-spacing:0.08px;">Коеф. ALFAct урахування тривалості дії навантажень (розтяг)</div>
<div class="t" style="left:649px;top:371px;font-size:11px;line-height:11px;color:#333;font-weight:normal;font-family:'Liberation Sans';letter-spacing:0.08px;">1.00</div>
<div class="t" style="left:34px;top:385px;font-size:11px;line-height:11px;color:#333;font-weight:normal;font-family:'Liberation Sans';letter-spacing:0.08px;">Коеф. Yc2 для БК урахування руйнування бетонних конструкцій</div>
<div class="t" style="left:649px;top:385px;font-size:11px;line-height:11px;color:#333;font-weight:normal;font-family:'Liberation Sans';letter-spacing:0.08px;">1.00</div>
<div class="t" style="left:34px;top:399px;font-size:11px;line-height:11px;color:#333;font-weight:normal;font-family:'Liberation Sans';letter-spacing:0.08px;">Коеф. Yc3 для БК та <span style="letter-spacing:-0.5px">ЗБК</span>, що бетонуються у вертикальному положенні</div>
<div class="t" style="left:649px;top:399px;font-size:11px;line-height:11px;color:#333;font-weight:normal;font-family:'Liberation Sans';letter-spacing:0.08px;">1.00</div>
<div class="t" style="left:29px;top:418px;font-size:11px;line-height:11px;color:#333;font-weight:normal;font-family:'Liberation Sans';letter-spacing:0.08px;">Коефіцієнти роботи арматури</div>
<div class="a" style="left:29px;top:435px;width:684px;height:29px;border:1px solid #333;box-sizing:border-box;"></div>
<div class="a" style="left:644px;top:435px;width:1px;height:28px;background:#333"></div>
<div class="a" style="left:29px;top:449px;width:683px;height:1px;background:#333"></div>
<div class="t" style="left:34px;top:437px;font-size:11px;line-height:11px;color:#333;font-weight:normal;font-family:'Liberation Sans';letter-spacing:0.08px;">Сейсмічний вплив. Коефіцієнт з таблиці 6.13 п.2 <span style="letter-spacing:-0.5px">ДБН</span> В.1.1-12:2014</div>
<div class="t" style="left:649px;top:437px;font-size:11px;line-height:11px;color:#333;font-weight:normal;font-family:'Liberation Sans';letter-spacing:0.08px;">1.00</div>
<div class="t" style="left:34px;top:451px;font-size:11px;line-height:11px;color:#333;font-weight:normal;font-family:'Liberation Sans';letter-spacing:0.08px;">Сейсмічний вплив. Коефіцієнт з таблиці 6.13 п.3 (похилий переріз) <span style="letter-spacing:-0.5px">ДБН</span> В.1.1-12:2014</div>
<div class="t" style="left:649px;top:451px;font-size:11px;line-height:11px;color:#333;font-weight:normal;font-family:'Liberation Sans';letter-spacing:0.08px;">0.90</div>
<div class="t" style="left:29px;top:480px;font-size:11px;line-height:11px;color:#333;font-weight:normal;font-family:'Liberation Sans';letter-spacing:0.08px;"><span style="letter-spacing:-0.5px">ВОГНЕСТІЙКІСТЬ</span> ( Межа вогнестійкості: R30; Грані схильні до нагрівання: Низ Верх Ліво Право )</div>
<div class="t" style="left:29px;top:499px;font-size:11px;line-height:11px;color:#333;font-weight:normal;font-family:'Liberation Sans';letter-spacing:0.08px;"><span style="letter-spacing:-0.5px">БЕТОН</span>: силікатний заповнювач. <span style="letter-spacing:-0.5px">АРМАТУРА</span>: Клас N - Гарячекатана.</div>
<div class="t" style="left:29px;top:518px;font-size:11px;line-height:11px;color:#333;font-weight:normal;font-family:'Liberation Sans';letter-spacing:0.08px;">Температурно-часова залежність розвитку пожежі ( Стандартний )</div>
<div class="a" style="left:29px;top:535px;width:681px;height:62px;border:1px solid #333;box-sizing:border-box;"></div>
<div class="a" style="left:29px;top:568px;width:680px;height:1px;background:#333"></div>
<div class="a" style="left:143px;top:535px;width:1px;height:61px;background:#333"></div>
<div class="t" style="left:34px;top:542px;font-size:11px;line-height:11px;color:#333;font-weight:normal;font-family:'Liberation Sans';letter-spacing:0.08px;">Час, Хв.</div>
<div class="t" style="left:34px;top:556px;font-size:11px;line-height:11px;color:#333;font-weight:normal;font-family:'Liberation Sans';letter-spacing:0.08px;">Температура, °C</div>
<div class="t" style="left:34px;top:570px;font-size:11px;line-height:11px;color:#333;font-weight:normal;font-family:'Liberation Sans';letter-spacing:0.08px;">Час, Хв.</div>
<div class="t" style="left:34px;top:584px;font-size:11px;line-height:11px;color:#333;font-weight:normal;font-family:'Liberation Sans';letter-spacing:0.08px;">Температура, °C</div>
<div class="t" style="left:148px;top:542px;font-size:11px;line-height:11px;color:#333;font-weight:normal;font-family:'Liberation Sans';letter-spacing:0.08px;">0</div>
<div class="t" style="left:148px;top:556px;font-size:11px;line-height:11px;color:#333;font-weight:normal;font-family:'Liberation Sans';letter-spacing:0.08px;">20</div>
<div class="t" style="left:148px;top:570px;font-size:11px;line-height:11px;color:#333;font-weight:normal;font-family:'Liberation Sans';letter-spacing:0.08px;">80</div>
<div class="t" style="left:148px;top:584px;font-size:11px;line-height:11px;color:#333;font-weight:normal;font-family:'Liberation Sans';letter-spacing:0.08px;">990</div>
<div class="t" style="left:199px;top:542px;font-size:11px;line-height:11px;color:#333;font-weight:normal;font-family:'Liberation Sans';letter-spacing:0.08px;">5</div>
<div class="t" style="left:199px;top:556px;font-size:11px;line-height:11px;color:#333;font-weight:normal;font-family:'Liberation Sans';letter-spacing:0.08px;">576</div>
<div class="t" style="left:199px;top:570px;font-size:11px;line-height:11px;color:#333;font-weight:normal;font-family:'Liberation Sans';letter-spacing:0.08px;">90</div>
<div class="t" style="left:199px;top:584px;font-size:11px;line-height:11px;color:#333;font-weight:normal;font-family:'Liberation Sans';letter-spacing:0.08px;">1000</div>
<div class="t" style="left:250px;top:542px;font-size:11px;line-height:11px;color:#333;font-weight:normal;font-family:'Liberation Sans';letter-spacing:0.08px;">10</div>
<div class="t" style="left:250px;top:556px;font-size:11px;line-height:11px;color:#333;font-weight:normal;font-family:'Liberation Sans';letter-spacing:0.08px;">679</div>
<div class="t" style="left:250px;top:570px;font-size:11px;line-height:11px;color:#333;font-weight:normal;font-family:'Liberation Sans';letter-spacing:0.08px;">100</div>
<div class="t" style="left:250px;top:584px;font-size:11px;line-height:11px;color:#333;font-weight:normal;font-family:'Liberation Sans';letter-spacing:0.08px;">1025</div>
<div class="t" style="left:301px;top:542px;font-size:11px;line-height:11px;color:#333;font-weight:normal;font-family:'Liberation Sans';letter-spacing:0.08px;">15</div>
<div class="t" style="left:301px;top:556px;font-size:11px;line-height:11px;color:#333;font-weight:normal;font-family:'Liberation Sans';letter-spacing:0.08px;">738</div>
<div class="t" style="left:301px;top:570px;font-size:11px;line-height:11px;color:#333;font-weight:normal;font-family:'Liberation Sans';letter-spacing:0.08px;">110</div>
<div class="t" style="left:301px;top:584px;font-size:11px;line-height:11px;color:#333;font-weight:normal;font-family:'Liberation Sans';letter-spacing:0.08px;">1035</div>
<div class="t" style="left:352px;top:542px;font-size:11px;line-height:11px;color:#333;font-weight:normal;font-family:'Liberation Sans';letter-spacing:0.08px;">20</div>
<div class="t" style="left:352px;top:556px;font-size:11px;line-height:11px;color:#333;font-weight:normal;font-family:'Liberation Sans';letter-spacing:0.08px;">781</div>
<div class="t" style="left:352px;top:570px;font-size:11px;line-height:11px;color:#333;font-weight:normal;font-family:'Liberation Sans';letter-spacing:0.08px;">120</div>
<div class="t" style="left:352px;top:584px;font-size:11px;line-height:11px;color:#333;font-weight:normal;font-family:'Liberation Sans';letter-spacing:0.08px;">1049</div>
<div class="t" style="left:403px;top:542px;font-size:11px;line-height:11px;color:#333;font-weight:normal;font-family:'Liberation Sans';letter-spacing:0.08px;">25</div>
<div class="t" style="left:403px;top:556px;font-size:11px;line-height:11px;color:#333;font-weight:normal;font-family:'Liberation Sans';letter-spacing:0.08px;">810</div>
<div class="t" style="left:403px;top:570px;font-size:11px;line-height:11px;color:#333;font-weight:normal;font-family:'Liberation Sans';letter-spacing:0.08px;">150</div>
<div class="t" style="left:403px;top:584px;font-size:11px;line-height:11px;color:#333;font-weight:normal;font-family:'Liberation Sans';letter-spacing:0.08px;">1082</div>
<div class="t" style="left:454px;top:542px;font-size:11px;line-height:11px;color:#333;font-weight:normal;font-family:'Liberation Sans';letter-spacing:0.08px;">30</div>
<div class="t" style="left:454px;top:556px;font-size:11px;line-height:11px;color:#333;font-weight:normal;font-family:'Liberation Sans';letter-spacing:0.08px;">841</div>
<div class="t" style="left:454px;top:570px;font-size:11px;line-height:11px;color:#333;font-weight:normal;font-family:'Liberation Sans';letter-spacing:0.08px;">180</div>
<div class="t" style="left:454px;top:584px;font-size:11px;line-height:11px;color:#333;font-weight:normal;font-family:'Liberation Sans';letter-spacing:0.08px;">1110</div>
<div class="t" style="left:505px;top:542px;font-size:11px;line-height:11px;color:#333;font-weight:normal;font-family:'Liberation Sans';letter-spacing:0.08px;">40</div>
<div class="t" style="left:505px;top:556px;font-size:11px;line-height:11px;color:#333;font-weight:normal;font-family:'Liberation Sans';letter-spacing:0.08px;">885</div>
<div class="t" style="left:505px;top:570px;font-size:11px;line-height:11px;color:#333;font-weight:normal;font-family:'Liberation Sans';letter-spacing:0.08px;">210</div>
<div class="t" style="left:505px;top:584px;font-size:11px;line-height:11px;color:#333;font-weight:normal;font-family:'Liberation Sans';letter-spacing:0.08px;">1133</div>
<div class="t" style="left:556px;top:542px;font-size:11px;line-height:11px;color:#333;font-weight:normal;font-family:'Liberation Sans';letter-spacing:0.08px;">50</div>
<div class="t" style="left:556px;top:556px;font-size:11px;line-height:11px;color:#333;font-weight:normal;font-family:'Liberation Sans';letter-spacing:0.08px;">915</div>
<div class="t" style="left:556px;top:570px;font-size:11px;line-height:11px;color:#333;font-weight:normal;font-family:'Liberation Sans';letter-spacing:0.08px;">240</div>
<div class="t" style="left:556px;top:584px;font-size:11px;line-height:11px;color:#333;font-weight:normal;font-family:'Liberation Sans';letter-spacing:0.08px;">1153</div>
<div class="t" style="left:607px;top:542px;font-size:11px;line-height:11px;color:#333;font-weight:normal;font-family:'Liberation Sans';letter-spacing:0.08px;">60</div>
<div class="t" style="left:607px;top:556px;font-size:11px;line-height:11px;color:#333;font-weight:normal;font-family:'Liberation Sans';letter-spacing:0.08px;">945</div>
<div class="t" style="left:607px;top:570px;font-size:11px;line-height:11px;color:#333;font-weight:normal;font-family:'Liberation Sans';letter-spacing:0.08px;">270</div>
<div class="t" style="left:607px;top:584px;font-size:11px;line-height:11px;color:#333;font-weight:normal;font-family:'Liberation Sans';letter-spacing:0.08px;">1170</div>
<div class="t" style="left:658px;top:542px;font-size:11px;line-height:11px;color:#333;font-weight:normal;font-family:'Liberation Sans';letter-spacing:0.08px;">70</div>
<div class="t" style="left:658px;top:556px;font-size:11px;line-height:11px;color:#333;font-weight:normal;font-family:'Liberation Sans';letter-spacing:0.08px;">970</div>
<div class="t" style="left:658px;top:570px;font-size:11px;line-height:11px;color:#333;font-weight:normal;font-family:'Liberation Sans';letter-spacing:0.08px;">300</div>
<div class="t" style="left:658px;top:584px;font-size:11px;line-height:11px;color:#333;font-weight:normal;font-family:'Liberation Sans';letter-spacing:0.08px;">1186</div>
<div class="t" style="left:29px;top:613px;font-size:11px;line-height:11px;color:#333;font-weight:normal;font-family:'Liberation Sans';letter-spacing:0.08px;"><span style="letter-spacing:-0.5px">СПОЛУЧЕННЯ</span> (<span style="letter-spacing:-0.5px">РСН</span> (розрахункові сполучення навантажень))</div>
<div class="a" style="left:29px;top:632px;width:684px;height:142px;border:1px solid #333;box-sizing:border-box;"></div>
<div class="a" style="left:29px;top:651px;width:683px;height:1px;background:#333"></div>
<div class="a" style="left:105px;top:632px;width:1px;height:19px;background:#333"></div>
<div class="a" style="left:181px;top:632px;width:1px;height:19px;background:#333"></div>
<div class="a" style="left:257px;top:632px;width:1px;height:19px;background:#333"></div>
<div class="a" style="left:333px;top:632px;width:1px;height:19px;background:#333"></div>
<div class="a" style="left:409px;top:632px;width:1px;height:19px;background:#333"></div>
<div class="a" style="left:485px;top:632px;width:1px;height:19px;background:#333"></div>
<div class="a" style="left:561px;top:632px;width:1px;height:19px;background:#333"></div>
<div class="a" style="left:637px;top:632px;width:1px;height:19px;background:#333"></div>
<div class="t" style="left:34px;top:637px;font-size:11px;line-height:11px;color:#333;font-weight:normal;font-family:'Liberation Sans';letter-spacing:0.08px;">Переріз</div>
<div class="t" style="left:114px;top:637px;font-size:11px;line-height:11px;color:#333;font-weight:normal;font-family:'Liberation Sans';letter-spacing:0.08px;">РС</div>
<div class="t" style="left:191px;top:637px;font-size:11px;line-height:11px;color:#333;font-weight:normal;font-family:'Liberation Sans';letter-spacing:0.08px;">Сейсміка</div>
<div class="t" style="left:267px;top:637px;font-size:11px;line-height:11px;color:#333;font-weight:normal;font-family:'Liberation Sans';letter-spacing:0.08px;">N (т)</div>
<div class="t" style="left:343px;top:637px;font-size:11px;line-height:11px;color:#333;font-weight:normal;font-family:'Liberation Sans';letter-spacing:0.08px;">Mx (т*м)</div>
<div class="t" style="left:419px;top:637px;font-size:11px;line-height:11px;color:#333;font-weight:normal;font-family:'Liberation Sans';letter-spacing:0.08px;">My (т*м)</div>
<div class="t" style="left:495px;top:637px;font-size:11px;line-height:11px;color:#333;font-weight:normal;font-family:'Liberation Sans';letter-spacing:0.08px;">Qz (т)</div>
<div class="t" style="left:571px;top:637px;font-size:11px;line-height:11px;color:#333;font-weight:normal;font-family:'Liberation Sans';letter-spacing:0.08px;">Mz (т*м)</div>
<div class="t" style="left:647px;top:637px;font-size:11px;line-height:11px;color:#333;font-weight:normal;font-family:'Liberation Sans';letter-spacing:0.08px;">Qy (т)</div>
<div class="t" style="left:40px;top:663px;font-size:11px;line-height:11px;color:#333;font-weight:normal;font-family:'Liberation Sans';letter-spacing:0.08px;">1</div>
<div class="t" style="left:110px;top:663px;font-size:11px;line-height:11px;color:#333;font-weight:normal;font-family:'Liberation Sans';letter-spacing:0.08px;">1 A1</div>
<div class="t" style="left:265px;top:663px;font-size:11px;line-height:11px;color:#333;font-weight:normal;font-family:'Liberation Sans';letter-spacing:0.08px;">-321.5694</div>
<div class="t" style="left:341px;top:663px;font-size:11px;line-height:11px;color:#333;font-weight:normal;font-family:'Liberation Sans';letter-spacing:0.08px;">-0.0385</div>
<div class="t" style="left:417px;top:663px;font-size:11px;line-height:11px;color:#333;font-weight:normal;font-family:'Liberation Sans';letter-spacing:0.08px;">4.1813</div>
<div class="t" style="left:493px;top:663px;font-size:11px;line-height:11px;color:#333;font-weight:normal;font-family:'Liberation Sans';letter-spacing:0.08px;">-2.0099</div>
<div class="t" style="left:569px;top:663px;font-size:11px;line-height:11px;color:#333;font-weight:normal;font-family:'Liberation Sans';letter-spacing:0.08px;">-5.6281</div>
<div class="t" style="left:645px;top:663px;font-size:11px;line-height:11px;color:#333;font-weight:normal;font-family:'Liberation Sans';letter-spacing:0.08px;">-4.2086</div>
<div class="t" style="left:110px;top:677px;font-size:11px;line-height:11px;color:#333;font-weight:normal;font-family:'Liberation Sans';letter-spacing:0.08px;">2 A1</div>
<div class="t" style="left:265px;top:677px;font-size:11px;line-height:11px;color:#333;font-weight:normal;font-family:'Liberation Sans';letter-spacing:0.08px;">-322.5568</div>
<div class="t" style="left:341px;top:677px;font-size:11px;line-height:11px;color:#333;font-weight:normal;font-family:'Liberation Sans';letter-spacing:0.08px;">-0.0539</div>
<div class="t" style="left:417px;top:677px;font-size:11px;line-height:11px;color:#333;font-weight:normal;font-family:'Liberation Sans';letter-spacing:0.08px;">6.1883</div>
<div class="t" style="left:493px;top:677px;font-size:11px;line-height:11px;color:#333;font-weight:normal;font-family:'Liberation Sans';letter-spacing:0.08px;">-3.2687</div>
<div class="t" style="left:569px;top:677px;font-size:11px;line-height:11px;color:#333;font-weight:normal;font-family:'Liberation Sans';letter-spacing:0.08px;">-6.1838</div>
<div class="t" style="left:645px;top:677px;font-size:11px;line-height:11px;color:#333;font-weight:normal;font-family:'Liberation Sans';letter-spacing:0.08px;">-4.5993</div>
<div class="t" style="left:110px;top:691px;font-size:11px;line-height:11px;color:#333;font-weight:normal;font-family:'Liberation Sans';letter-spacing:0.08px;">3 A1</div>
<div class="t" style="left:265px;top:691px;font-size:11px;line-height:11px;color:#333;font-weight:normal;font-family:'Liberation Sans';letter-spacing:0.08px;">-322.3004</div>
<div class="t" style="left:341px;top:691px;font-size:11px;line-height:11px;color:#333;font-weight:normal;font-family:'Liberation Sans';letter-spacing:0.08px;">-0.0542</div>
<div class="t" style="left:417px;top:691px;font-size:11px;line-height:11px;color:#333;font-weight:normal;font-family:'Liberation Sans';letter-spacing:0.08px;">5.3959</div>
<div class="t" style="left:493px;top:691px;font-size:11px;line-height:11px;color:#333;font-weight:normal;font-family:'Liberation Sans';letter-spacing:0.08px;">-2.7790</div>
<div class="t" style="left:569px;top:691px;font-size:11px;line-height:11px;color:#333;font-weight:normal;font-family:'Liberation Sans';letter-spacing:0.08px;">-6.2955</div>
<div class="t" style="left:645px;top:691px;font-size:11px;line-height:11px;color:#333;font-weight:normal;font-family:'Liberation Sans';letter-spacing:0.08px;">-4.6772</div>
<div class="t" style="left:110px;top:705px;font-size:11px;line-height:11px;color:#333;font-weight:normal;font-family:'Liberation Sans';letter-spacing:0.08px;">4 A1</div>
<div class="t" style="left:265px;top:705px;font-size:11px;line-height:11px;color:#333;font-weight:normal;font-family:'Liberation Sans';letter-spacing:0.08px;">-321.8258</div>
<div class="t" style="left:341px;top:705px;font-size:11px;line-height:11px;color:#333;font-weight:normal;font-family:'Liberation Sans';letter-spacing:0.08px;">-0.0382</div>
<div class="t" style="left:417px;top:705px;font-size:11px;line-height:11px;color:#333;font-weight:normal;font-family:'Liberation Sans';letter-spacing:0.08px;">4.9737</div>
<div class="t" style="left:493px;top:705px;font-size:11px;line-height:11px;color:#333;font-weight:normal;font-family:'Liberation Sans';letter-spacing:0.08px;">-2.4997</div>
<div class="t" style="left:569px;top:705px;font-size:11px;line-height:11px;color:#333;font-weight:normal;font-family:'Liberation Sans';letter-spacing:0.08px;">-5.5164</div>
<div class="t" style="left:645px;top:705px;font-size:11px;line-height:11px;color:#333;font-weight:normal;font-family:'Liberation Sans';letter-spacing:0.08px;">-4.1308</div>
<div class="t" style="left:110px;top:719px;font-size:11px;line-height:11px;color:#333;font-weight:normal;font-family:'Liberation Sans';letter-spacing:0.08px;">5 A1</div>
<div class="t" style="left:265px;top:719px;font-size:11px;line-height:11px;color:#333;font-weight:normal;font-family:'Liberation Sans';letter-spacing:0.08px;">-293.0848</div>
<div class="t" style="left:341px;top:719px;font-size:11px;line-height:11px;color:#333;font-weight:normal;font-family:'Liberation Sans';letter-spacing:0.08px;">-0.0430</div>
<div class="t" style="left:417px;top:719px;font-size:11px;line-height:11px;color:#333;font-weight:normal;font-family:'Liberation Sans';letter-spacing:0.08px;">4.6606</div>
<div class="t" style="left:493px;top:719px;font-size:11px;line-height:11px;color:#333;font-weight:normal;font-family:'Liberation Sans';letter-spacing:0.08px;">-2.3021</div>
<div class="t" style="left:569px;top:719px;font-size:11px;line-height:11px;color:#333;font-weight:normal;font-family:'Liberation Sans';letter-spacing:0.08px;">-5.6964</div>
<div class="t" style="left:645px;top:719px;font-size:11px;line-height:11px;color:#333;font-weight:normal;font-family:'Liberation Sans';letter-spacing:0.08px;">-4.2593</div>
<div class="t" style="left:110px;top:733px;font-size:11px;line-height:11px;color:#333;font-weight:normal;font-family:'Liberation Sans';letter-spacing:0.08px;">6 C1</div>
<div class="t" style="left:189px;top:733px;font-size:11px;line-height:11px;color:#333;font-weight:normal;font-family:'Liberation Sans';letter-spacing:0.08px;">C</div>
<div class="t" style="left:265px;top:733px;font-size:11px;line-height:11px;color:#333;font-weight:normal;font-family:'Liberation Sans';letter-spacing:0.08px;">-284.2522</div>
<div class="t" style="left:341px;top:733px;font-size:11px;line-height:11px;color:#333;font-weight:normal;font-family:'Liberation Sans';letter-spacing:0.08px;">-0.0047</div>
<div class="t" style="left:417px;top:733px;font-size:11px;line-height:11px;color:#333;font-weight:normal;font-family:'Liberation Sans';letter-spacing:0.08px;">0.8337</div>
<div class="t" style="left:493px;top:733px;font-size:11px;line-height:11px;color:#333;font-weight:normal;font-family:'Liberation Sans';letter-spacing:0.08px;">0.0406</div>
<div class="t" style="left:569px;top:733px;font-size:11px;line-height:11px;color:#333;font-weight:normal;font-family:'Liberation Sans';letter-spacing:0.08px;">-4.1224</div>
<div class="t" style="left:645px;top:733px;font-size:11px;line-height:11px;color:#333;font-weight:normal;font-family:'Liberation Sans';letter-spacing:0.08px;">-3.1098</div>
<div class="t" style="left:110px;top:747px;font-size:11px;line-height:11px;color:#333;font-weight:normal;font-family:'Liberation Sans';letter-spacing:0.08px;">7 C1</div>
<div class="t" style="left:189px;top:747px;font-size:11px;line-height:11px;color:#333;font-weight:normal;font-family:'Liberation Sans';letter-spacing:0.08px;">C</div>
<div class="t" style="left:265px;top:747px;font-size:11px;line-height:11px;color:#333;font-weight:normal;font-family:'Liberation Sans';letter-spacing:0.08px;">-289.2343</div>
<div class="t" style="left:341px;top:747px;font-size:11px;line-height:11px;color:#333;font-weight:normal;font-family:'Liberation Sans';letter-spacing:0.08px;">-0.0773</div>
<div class="t" style="left:417px;top:747px;font-size:11px;line-height:11px;color:#333;font-weight:normal;font-family:'Liberation Sans';letter-spacing:0.08px;">8.3640</div>
<div class="t" style="left:493px;top:747px;font-size:11px;line-height:11px;color:#333;font-weight:normal;font-family:'Liberation Sans';letter-spacing:0.08px;">-4.7274</div>
<div class="t" style="left:569px;top:747px;font-size:11px;line-height:11px;color:#333;font-weight:normal;font-family:'Liberation Sans';letter-spacing:0.08px;">-6.4297</div>
<div class="t" style="left:645px;top:747px;font-size:11px;line-height:11px;color:#333;font-weight:normal;font-family:'Liberation Sans';letter-spacing:0.08px;">-4.7547</div>
<div class="t" style="left:29px;top:785px;font-size:11px;line-height:11px;color:#333;font-weight:normal;font-family:'Liberation Sans';letter-spacing:0.08px;"><span style="letter-spacing:-0.5px">АРМАТУРА</span>  ( Підбір арматури )</div>
<div class="a" style="left:29px;top:805px;width:684px;height:89px;border:1px solid #333;box-sizing:border-box;"></div>
<div class="a" style="left:93px;top:821px;width:619px;height:1px;background:#333"></div>
<div class="a" style="left:29px;top:842px;width:683px;height:1px;background:#333"></div>
<div class="a" style="left:62px;top:805px;width:1px;height:37px;background:#333"></div>
<div class="a" style="left:93px;top:805px;width:1px;height:37px;background:#333"></div>
<div class="a" style="left:140px;top:821px;width:1px;height:21px;background:#333"></div>
<div class="a" style="left:187px;top:821px;width:1px;height:21px;background:#333"></div>
<div class="a" style="left:234px;top:821px;width:1px;height:21px;background:#333"></div>
<div class="a" style="left:281px;top:821px;width:1px;height:21px;background:#333"></div>
<div class="a" style="left:328px;top:821px;width:1px;height:21px;background:#333"></div>
<div class="a" style="left:375px;top:821px;width:1px;height:21px;background:#333"></div>
<div class="a" style="left:422px;top:821px;width:1px;height:21px;background:#333"></div>
<div class="a" style="left:469px;top:821px;width:1px;height:21px;background:#333"></div>
<div class="a" style="left:565px;top:821px;width:1px;height:21px;background:#333"></div>
<div class="a" style="left:663px;top:821px;width:1px;height:21px;background:#333"></div>
<div class="a" style="left:516px;top:805px;width:1px;height:37px;background:#333"></div>
<div class="a" style="left:614px;top:805px;width:1px;height:37px;background:#333"></div>
<div class="t" style="left:281px;top:809px;font-size:11px;line-height:11px;color:#333;font-weight:normal;font-family:'Liberation Sans';letter-spacing:0.08px;">Поздовжня</div>
<div class="t" style="left:521px;top:809px;font-size:11px;line-height:11px;color:#333;font-weight:normal;font-family:'Liberation Sans';letter-spacing:0.08px;">Поперечна</div>
<div class="t" style="left:626px;top:809px;font-size:11px;line-height:11px;color:#333;font-weight:normal;font-family:'Liberation Sans';letter-spacing:0.08px;">Тріщини</div>
<div class="t" style="left:34px;top:826px;font-size:11px;line-height:11px;color:#333;font-weight:normal;font-family:'Liberation Sans';letter-spacing:0.08px;">Пер</div>
<div class="t" style="left:67px;top:826px;font-size:11px;line-height:11px;color:#333;font-weight:normal;font-family:'Liberation Sans';letter-spacing:0.08px;">Сим</div>
<div class="t" style="left:98px;top:826px;font-size:11px;line-height:11px;color:#333;font-weight:normal;font-family:'Liberation Sans';letter-spacing:0.08px;">AU1</div>
<div class="t" style="left:145px;top:826px;font-size:11px;line-height:11px;color:#333;font-weight:normal;font-family:'Liberation Sans';letter-spacing:0.08px;">AU2</div>
<div class="t" style="left:192px;top:826px;font-size:11px;line-height:11px;color:#333;font-weight:normal;font-family:'Liberation Sans';letter-spacing:0.08px;">AU3</div>
<div class="t" style="left:239px;top:826px;font-size:11px;line-height:11px;color:#333;font-weight:normal;font-family:'Liberation Sans';letter-spacing:0.08px;">AU4</div>
<div class="t" style="left:286px;top:826px;font-size:11px;line-height:11px;color:#333;font-weight:normal;font-family:'Liberation Sans';letter-spacing:0.08px;">AS1</div>
<div class="t" style="left:333px;top:826px;font-size:11px;line-height:11px;color:#333;font-weight:normal;font-family:'Liberation Sans';letter-spacing:0.08px;">AS2</div>
<div class="t" style="left:380px;top:826px;font-size:11px;line-height:11px;color:#333;font-weight:normal;font-family:'Liberation Sans';letter-spacing:0.08px;">AS3</div>
<div class="t" style="left:427px;top:826px;font-size:11px;line-height:11px;color:#333;font-weight:normal;font-family:'Liberation Sans';letter-spacing:0.08px;">AS4</div>
<div class="t" style="left:474px;top:826px;font-size:11px;line-height:11px;color:#333;font-weight:normal;font-family:'Liberation Sans';letter-spacing:0.08px;">%</div>
<div class="t" style="left:521px;top:826px;font-size:11px;line-height:11px;color:#333;font-weight:normal;font-family:'Liberation Sans';letter-spacing:0.08px;">Asw1</div>
<div class="t" style="left:570px;top:826px;font-size:11px;line-height:11px;color:#333;font-weight:normal;font-family:'Liberation Sans';letter-spacing:0.08px;">Asw2</div>
<div class="t" style="left:619px;top:826px;font-size:11px;line-height:11px;color:#333;font-weight:normal;font-family:'Liberation Sans';letter-spacing:0.08px;">коротк.</div>
<div class="t" style="left:668px;top:826px;font-size:11px;line-height:11px;color:#333;font-weight:normal;font-family:'Liberation Sans';letter-spacing:0.08px;">тривал.</div>
<div class="t" style="left:34px;top:853px;font-size:11px;line-height:11px;color:#333;font-weight:normal;font-family:'Liberation Sans';letter-spacing:0.08px;">1</div>
<div class="t" style="left:66px;top:853px;font-size:11px;line-height:11px;color:#333;font-weight:normal;font-family:'Liberation Sans';letter-spacing:0.08px;">C</div>
<div class="t" style="left:67px;top:881px;font-size:11px;line-height:11px;color:#333;font-weight:normal;font-family:'Liberation Sans';letter-spacing:0.08px;">*</div>
<div class="t" style="left:97px;top:853px;font-size:11px;line-height:11px;color:#333;font-weight:normal;font-family:'Liberation Sans';letter-spacing:0.08px;">3.80</div>
<div class="t" style="left:97px;top:867px;font-size:11px;line-height:11px;color:#333;font-weight:normal;font-family:'Liberation Sans';letter-spacing:0.08px;">3.80</div>
<div class="t" style="left:97px;top:881px;font-size:11px;line-height:11px;color:#333;font-weight:normal;font-family:'Liberation Sans';letter-spacing:0.08px;">0.01</div>
<div class="t" style="left:144px;top:853px;font-size:11px;line-height:11px;color:#333;font-weight:normal;font-family:'Liberation Sans';letter-spacing:0.08px;">3.80</div>
<div class="t" style="left:144px;top:867px;font-size:11px;line-height:11px;color:#333;font-weight:normal;font-family:'Liberation Sans';letter-spacing:0.08px;">3.80</div>
<div class="t" style="left:144px;top:881px;font-size:11px;line-height:11px;color:#333;font-weight:normal;font-family:'Liberation Sans';letter-spacing:0.08px;">0.01</div>
<div class="t" style="left:191px;top:853px;font-size:11px;line-height:11px;color:#333;font-weight:normal;font-family:'Liberation Sans';letter-spacing:0.08px;">3.80</div>
<div class="t" style="left:191px;top:867px;font-size:11px;line-height:11px;color:#333;font-weight:normal;font-family:'Liberation Sans';letter-spacing:0.08px;">3.80</div>
<div class="t" style="left:191px;top:881px;font-size:11px;line-height:11px;color:#333;font-weight:normal;font-family:'Liberation Sans';letter-spacing:0.08px;">0.01</div>
<div class="t" style="left:238px;top:853px;font-size:11px;line-height:11px;color:#333;font-weight:normal;font-family:'Liberation Sans';letter-spacing:0.08px;">3.80</div>
<div class="t" style="left:238px;top:867px;font-size:11px;line-height:11px;color:#333;font-weight:normal;font-family:'Liberation Sans';letter-spacing:0.08px;">3.80</div>
<div class="t" style="left:238px;top:881px;font-size:11px;line-height:11px;color:#333;font-weight:normal;font-family:'Liberation Sans';letter-spacing:0.08px;">0.01</div>
<div class="t" style="left:285px;top:853px;font-size:11px;line-height:11px;color:#333;font-weight:normal;font-family:'Liberation Sans';letter-spacing:0.08px;">1.50</div>
<div class="t" style="left:285px;top:867px;font-size:11px;line-height:11px;color:#333;font-weight:normal;font-family:'Liberation Sans';letter-spacing:0.08px;">1.50</div>
<div class="t" style="left:285px;top:881px;font-size:11px;line-height:11px;color:#333;font-weight:normal;font-family:'Liberation Sans';letter-spacing:0.08px;">0.03</div>
<div class="t" style="left:332px;top:853px;font-size:11px;line-height:11px;color:#333;font-weight:normal;font-family:'Liberation Sans';letter-spacing:0.08px;">1.50</div>
<div class="t" style="left:332px;top:867px;font-size:11px;line-height:11px;color:#333;font-weight:normal;font-family:'Liberation Sans';letter-spacing:0.08px;">1.50</div>
<div class="t" style="left:332px;top:881px;font-size:11px;line-height:11px;color:#333;font-weight:normal;font-family:'Liberation Sans';letter-spacing:0.08px;">0.03</div>
<div class="t" style="left:379px;top:853px;font-size:11px;line-height:11px;color:#333;font-weight:normal;font-family:'Liberation Sans';letter-spacing:0.08px;">5.67</div>
<div class="t" style="left:379px;top:867px;font-size:11px;line-height:11px;color:#333;font-weight:normal;font-family:'Liberation Sans';letter-spacing:0.08px;">5.67</div>
<div class="t" style="left:379px;top:881px;font-size:11px;line-height:11px;color:#333;font-weight:normal;font-family:'Liberation Sans';letter-spacing:0.08px;">0.03</div>
<div class="t" style="left:426px;top:853px;font-size:11px;line-height:11px;color:#333;font-weight:normal;font-family:'Liberation Sans';letter-spacing:0.08px;">5.67</div>
<div class="t" style="left:426px;top:867px;font-size:11px;line-height:11px;color:#333;font-weight:normal;font-family:'Liberation Sans';letter-spacing:0.08px;">5.67</div>
<div class="t" style="left:426px;top:881px;font-size:11px;line-height:11px;color:#333;font-weight:normal;font-family:'Liberation Sans';letter-spacing:0.08px;">0.03</div>
<div class="t" style="left:473px;top:853px;font-size:11px;line-height:11px;color:#333;font-weight:normal;font-family:'Liberation Sans';letter-spacing:0.08px;">1.48</div>
<div class="t" style="left:473px;top:867px;font-size:11px;line-height:11px;color:#333;font-weight:normal;font-family:'Liberation Sans';letter-spacing:0.08px;">1.48</div>
<div class="t" style="left:520px;top:853px;font-size:11px;line-height:11px;color:#333;font-weight:normal;font-family:'Liberation Sans';letter-spacing:0.08px;">0.34</div>
<div class="t" style="left:520px;top:881px;font-size:11px;line-height:11px;color:#333;font-weight:normal;font-family:'Liberation Sans';letter-spacing:0.08px;">0.31</div>
<div class="t" style="left:569px;top:853px;font-size:11px;line-height:11px;color:#333;font-weight:normal;font-family:'Liberation Sans';letter-spacing:0.08px;">0.31</div>
<div class="t" style="left:569px;top:881px;font-size:11px;line-height:11px;color:#333;font-weight:normal;font-family:'Liberation Sans';letter-spacing:0.08px;">0.31</div>
<div class="t" style="left:29px;top:905px;font-size:11px;line-height:11px;color:#333;font-weight:normal;font-family:'Liberation Sans';letter-spacing:0.08px;">У таблиці результатів армування</div>
<div class="t" style="left:32px;top:919px;font-size:11px;line-height:11px;color:#333;font-weight:normal;font-family:'Liberation Sans';letter-spacing:0.08px;">AU1 - арматура кутова нижня (ліворуч) [см2];</div>
<div class="t" style="left:32px;top:933px;font-size:11px;line-height:11px;color:#333;font-weight:normal;font-family:'Liberation Sans';letter-spacing:0.08px;">AU2 - арматура кутова нижня (праворуч) [см2];</div>
<div class="t" style="left:32px;top:947px;font-size:11px;line-height:11px;color:#333;font-weight:normal;font-family:'Liberation Sans';letter-spacing:0.08px;">AU3 - арматура кутова верхня (ліворуч) [см2];</div>
<div class="a" style="left:771px;top:531px;width:950px;height:413px;background:#fff"></div>
<div class="a" style="left:771px;top:531px;width:206px;height:1px;background:#5a5a5a"></div>
<div class="a" style="left:1441px;top:531px;width:280px;height:1px;background:#5a5a5a"></div>
<div class="a" style="left:771px;top:531px;width:1px;height:413px;background:#5a5a5a"></div>
<div class="a" style="left:1720px;top:531px;width:1px;height:413px;background:#5a5a5a"></div>
<div class="a" style="left:771px;top:943px;width:950px;height:1px;background:#5a5a5a"></div>
<svg style="left:780px;top:539px" width="15" height="13" viewBox="0 0 15 13">
<rect x="0.5" y="0.5" width="14" height="12" fill="#f4f4f4" stroke="#a8a8a8"/>
<defs><linearGradient id="di780" x1="0" y1="0" x2="0" y2="1"><stop offset="0" stop-color="#4a7ab0"/><stop offset="1" stop-color="#3a9a60"/></linearGradient></defs>
<rect x="2" y="2" width="5" height="9" fill="url(#di780)"/>
<rect x="8" y="2" width="2" height="9" fill="#dcdcdc"/>
<rect x="11" y="2" width="2" height="4" fill="#5a9ad0"/><rect x="11" y="6" width="2" height="5" fill="#e4e4e4"/>
</svg>
<div class="t" style="left:801px;top:541px;font-size:12px;line-height:12px;color:#000;font-weight:normal;font-family:'Liberation Sans';">Вогнестійкість елемента</div>
<svg style="left:1699px;top:540px" width="11" height="11"><path d="M0.5 0.5 L10.5 10.5 M10.5 0.5 L0.5 10.5" stroke="#222" stroke-width="1.1"/></svg>
<div class="a" style="left:772px;top:562px;width:464px;height:381px;background:#f0f0f0"></div>
<div class="a" style="left:1236px;top:559px;width:1px;height:384px;background:#5a5a5a"></div>
<div class="a" style="left:1256px;top:562px;width:464px;height:381px;background:#f0f0f0"></div>
<div class="a" style="left:1255px;top:559px;width:1px;height:384px;background:#5a5a5a"></div>
<div class="a" style="left:796px;top:565px;width:424px;height:362px;background:#fff;border:2px solid #6e6e6e;box-sizing:border-box"></div>
<div class="a" style="left:1280px;top:565px;width:424px;height:362px;background:#fff;border:2px solid #6e6e6e;box-sizing:border-box"></div>
<div class="t" style="left:805px;top:573px;font-size:11px;line-height:11px;color:#118494;font-weight:normal;font-family:'Liberation Sans';">Tb, °C</div>
<div class="t" style="left:805px;top:589px;font-size:11px;line-height:11px;color:#118494;font-weight:normal;font-family:'Liberation Sans';">Ізополя</div>
<div class="t" style="left:1288px;top:574px;font-size:11px;line-height:11px;color:#118494;font-weight:normal;font-family:'Liberation Sans';">Ts, °C</div>
<div class="t" style="left:1289px;top:589px;font-size:11px;line-height:11px;color:#118494;font-weight:normal;font-family:'Liberation Sans';">Ізополя</div>
<svg style="left:870px;top:582px" width="12" height="324" viewBox="0 0 12 324"><rect x="1" y="1" width="8" height="40" fill="#ffff70"/><rect x="1" y="41" width="8" height="40" fill="#ffe858"/><rect x="1" y="81" width="8" height="40" fill="#ffd838"/><rect x="1" y="121" width="8" height="40" fill="#ffbb30"/><rect x="1" y="161" width="8" height="40" fill="#ffa020"/><rect x="1" y="201" width="8" height="40" fill="#ff6600"/><rect x="1" y="241" width="8" height="40" fill="#c82800"/><rect x="1" y="281" width="8" height="39" fill="#780000"/><rect x="0.5" y="0.5" width="9" height="319.5" fill="none" stroke="#7a7a7a" stroke-width="1"/><rect x="1" y="40" width="8" height="2" fill="#7a7a7a"/><rect x="1" y="80" width="8" height="2" fill="#7a7a7a"/><rect x="1" y="120" width="8" height="2" fill="#7a7a7a"/><rect x="1" y="160" width="8" height="2" fill="#7a7a7a"/><rect x="1" y="200" width="8" height="2" fill="#7a7a7a"/><rect x="1" y="240" width="8" height="2" fill="#7a7a7a"/><rect x="1" y="280" width="8" height="2" fill="#7a7a7a"/></svg>
<div class="t" style="left:869px;width:60px;text-align:center;top:580px;font-size:11px;line-height:11px;color:#118494">20</div>
<div class="t" style="left:869px;width:60px;text-align:center;top:620px;font-size:11px;line-height:11px;color:#118494">115</div>
<div class="t" style="left:869px;width:60px;text-align:center;top:660px;font-size:11px;line-height:11px;color:#118494">210</div>
<div class="t" style="left:869px;width:60px;text-align:center;top:700px;font-size:11px;line-height:11px;color:#118494">305</div>
<div class="t" style="left:869px;width:60px;text-align:center;top:740px;font-size:11px;line-height:11px;color:#118494">400</div>
<div class="t" style="left:869px;width:60px;text-align:center;top:780px;font-size:11px;line-height:11px;color:#118494">495</div>
<div class="t" style="left:869px;width:60px;text-align:center;top:820px;font-size:11px;line-height:11px;color:#118494">590</div>
<div class="t" style="left:869px;width:60px;text-align:center;top:860px;font-size:11px;line-height:11px;color:#118494">685</div>
<div class="t" style="left:869px;width:60px;text-align:center;top:900px;font-size:11px;line-height:11px;color:#118494">780</div>
<svg style="left:1353px;top:584px" width="12" height="324" viewBox="0 0 12 324"><rect x="1" y="1" width="8" height="40" fill="#ffff70"/><rect x="1" y="41" width="8" height="40" fill="#ffe858"/><rect x="1" y="81" width="8" height="40" fill="#ffd838"/><rect x="1" y="121" width="8" height="40" fill="#ffbb30"/><rect x="1" y="161" width="8" height="40" fill="#ffa020"/><rect x="1" y="201" width="8" height="40" fill="#ff6600"/><rect x="1" y="241" width="8" height="40" fill="#c82800"/><rect x="1" y="281" width="8" height="39" fill="#780000"/><rect x="0.5" y="0.5" width="9" height="319.5" fill="none" stroke="#7a7a7a" stroke-width="1"/><rect x="1" y="40" width="8" height="2" fill="#7a7a7a"/><rect x="1" y="80" width="8" height="2" fill="#7a7a7a"/><rect x="1" y="120" width="8" height="2" fill="#7a7a7a"/><rect x="1" y="160" width="8" height="2" fill="#7a7a7a"/><rect x="1" y="200" width="8" height="2" fill="#7a7a7a"/><rect x="1" y="240" width="8" height="2" fill="#7a7a7a"/><rect x="1" y="280" width="8" height="2" fill="#7a7a7a"/></svg>
<div class="t" style="left:1373px;top:583px;font-size:11px;line-height:11px;color:#118494;font-weight:normal;font-family:'Liberation Sans';">153</div>
<div class="t" style="left:1373px;top:623px;font-size:11px;line-height:11px;color:#118494;font-weight:normal;font-family:'Liberation Sans';">170</div>
<div class="t" style="left:1373px;top:663px;font-size:11px;line-height:11px;color:#118494;font-weight:normal;font-family:'Liberation Sans';">186</div>
<div class="t" style="left:1373px;top:703px;font-size:11px;line-height:11px;color:#118494;font-weight:normal;font-family:'Liberation Sans';">203</div>
<div class="t" style="left:1373px;top:743px;font-size:11px;line-height:11px;color:#118494;font-weight:normal;font-family:'Liberation Sans';">219</div>
<div class="t" style="left:1373px;top:783px;font-size:11px;line-height:11px;color:#118494;font-weight:normal;font-family:'Liberation Sans';">236</div>
<div class="t" style="left:1373px;top:823px;font-size:11px;line-height:11px;color:#118494;font-weight:normal;font-family:'Liberation Sans';">252</div>
<div class="t" style="left:1373px;top:863px;font-size:11px;line-height:11px;color:#118494;font-weight:normal;font-family:'Liberation Sans';">269</div>
<div class="t" style="left:1373px;top:903px;font-size:11px;line-height:11px;color:#118494;font-weight:normal;font-family:'Liberation Sans';">285</div>
<svg style="left:955px;top:607px" width="226" height="266" viewBox="955 607 226 266"><rect x="955" y="607" width="226" height="266" fill="#808080"/><rect x="958" y="610" width="220" height="260" fill="#780000"/><rect x="958" y="610" width="220" height="260" rx="10" ry="10" fill="#c82800"/><rect x="958" y="610" width="220" height="260" rx="18" ry="18" fill="#ff6600"/><rect x="961" y="613.5" width="214.5" height="254.0" rx="22" ry="22" fill="#ffa020"/><rect x="964" y="617" width="209" height="246" rx="26" ry="28" fill="#ffbb30"/><rect x="970" y="621" width="197" height="237" rx="30" ry="32" fill="#ffd838"/><rect x="977" y="629.5" width="183" height="221.5" rx="30" ry="34" fill="#ffe858"/><path d="M999 638.5 H1138 Q1142 639 1144 643 L1154 676 V805 L1142 836 Q1139 842 1133 842 H1004 Q998 842 995 836 L983 805 V676 L993 643 Q995 639 999 638.5 Z" fill="#ffff70"/></svg>
<div class="a" style="left:1071px;top:705px;width:2px;height:41px;background:#7a0000"></div>
<div class="a" style="left:1031px;top:744px;width:42px;height:2px;background:#000080"></div>
<svg style="left:1441px;top:606px" width="226" height="270"><rect x="2.5" y="2.5" width="220" height="264" fill="#fff" stroke="#7a7a7a" stroke-width="3"/></svg>
<svg style="left:1459px;top:624px" width="16" height="16"><circle cx="8" cy="8" r="6" fill="#800000" stroke="#0a7a0a" stroke-width="1"/></svg>
<div class="t" style="left:1476px;top:641px;font-size:11px;line-height:11px;color:#118494;font-weight:normal;font-family:'Liberation Sans';">285</div>
<svg style="left:1513px;top:624px" width="16" height="16"><circle cx="8" cy="8" r="6" fill="#ffe858" stroke="#0a7a0a" stroke-width="1"/></svg>
<div class="t" style="left:1530px;top:641px;font-size:11px;line-height:11px;color:#118494;font-weight:normal;font-family:'Liberation Sans';">179</div>
<svg style="left:1574px;top:624px" width="16" height="16"><circle cx="8" cy="8" r="6" fill="#ffe858" stroke="#0a7a0a" stroke-width="1"/></svg>
<div class="t" style="left:1591px;top:641px;font-size:11px;line-height:11px;color:#118494;font-weight:normal;font-family:'Liberation Sans';">179</div>
<svg style="left:1631px;top:624px" width="16" height="16"><circle cx="8" cy="8" r="6" fill="#800000" stroke="#0a7a0a" stroke-width="1"/></svg>
<div class="t" style="left:1648px;top:641px;font-size:11px;line-height:11px;color:#118494;font-weight:normal;font-family:'Liberation Sans';">285</div>
<svg style="left:1459px;top:700px" width="16" height="16"><circle cx="8" cy="8" r="6" fill="#ffff70" stroke="#0a7a0a" stroke-width="1"/></svg>
<div class="t" style="left:1476px;top:717px;font-size:11px;line-height:11px;color:#118494;font-weight:normal;font-family:'Liberation Sans';">153</div>
<svg style="left:1631px;top:700px" width="16" height="16"><circle cx="8" cy="8" r="6" fill="#ffff70" stroke="#0a7a0a" stroke-width="1"/></svg>
<div class="t" style="left:1648px;top:717px;font-size:11px;line-height:11px;color:#118494;font-weight:normal;font-family:'Liberation Sans';">153</div>
<svg style="left:1459px;top:771px" width="16" height="16"><circle cx="8" cy="8" r="6" fill="#ffff70" stroke="#0a7a0a" stroke-width="1"/></svg>
<div class="t" style="left:1476px;top:788px;font-size:11px;line-height:11px;color:#118494;font-weight:normal;font-family:'Liberation Sans';">153</div>
<svg style="left:1631px;top:771px" width="16" height="16"><circle cx="8" cy="8" r="6" fill="#ffff70" stroke="#0a7a0a" stroke-width="1"/></svg>
<div class="t" style="left:1648px;top:788px;font-size:11px;line-height:11px;color:#118494;font-weight:normal;font-family:'Liberation Sans';">153</div>
<svg style="left:1459px;top:841px" width="16" height="16"><circle cx="8" cy="8" r="6" fill="#800000" stroke="#0a7a0a" stroke-width="1"/></svg>
<div class="t" style="left:1476px;top:858px;font-size:11px;line-height:11px;color:#118494;font-weight:normal;font-family:'Liberation Sans';">285</div>
<svg style="left:1513px;top:841px" width="16" height="16"><circle cx="8" cy="8" r="6" fill="#ffe858" stroke="#0a7a0a" stroke-width="1"/></svg>
<div class="t" style="left:1530px;top:858px;font-size:11px;line-height:11px;color:#118494;font-weight:normal;font-family:'Liberation Sans';">179</div>
<svg style="left:1574px;top:841px" width="16" height="16"><circle cx="8" cy="8" r="6" fill="#ffe858" stroke="#0a7a0a" stroke-width="1"/></svg>
<div class="t" style="left:1591px;top:858px;font-size:11px;line-height:11px;color:#118494;font-weight:normal;font-family:'Liberation Sans';">179</div>
<svg style="left:1631px;top:841px" width="16" height="16"><circle cx="8" cy="8" r="6" fill="#800000" stroke="#0a7a0a" stroke-width="1"/></svg>
<div class="t" style="left:1648px;top:858px;font-size:11px;line-height:11px;color:#118494;font-weight:normal;font-family:'Liberation Sans';">285</div>
<div class="a" style="left:1561px;top:705px;width:2px;height:41px;background:#7a0000"></div>
<div class="a" style="left:1522px;top:744px;width:41px;height:2px;background:#000080"></div>
<div class="a" style="left:990px;top:130px;width:439px;height:416px;background:#fff;border:1px solid #6a6a6a;box-sizing:border-box"></div>
<svg style="left:999px;top:138px" width="15" height="13" viewBox="0 0 15 13">
<rect x="0.5" y="0.5" width="14" height="12" fill="#f4f4f4" stroke="#a8a8a8"/>
<defs><linearGradient id="di999" x1="0" y1="0" x2="0" y2="1"><stop offset="0" stop-color="#4a7ab0"/><stop offset="1" stop-color="#3a9a60"/></linearGradient></defs>
<rect x="2" y="2" width="5" height="9" fill="url(#di999)"/>
<rect x="8" y="2" width="2" height="9" fill="#dcdcdc"/>
<rect x="11" y="2" width="2" height="4" fill="#5a9ad0"/><rect x="11" y="6" width="2" height="5" fill="#e4e4e4"/>
</svg>
<div class="t" style="left:1021px;top:140px;font-size:12px;line-height:12px;color:#000;font-weight:normal;font-family:'Liberation Sans';">Розміщення арматури у перерізі</div>
<svg style="left:1408px;top:140px" width="11" height="11"><path d="M0.5 0.5 L10.5 10.5 M10.5 0.5 L0.5 10.5" stroke="#222" stroke-width="1.1"/></svg>
<div class="a" style="left:991px;top:161px;width:437px;height:62px;background:#f0f0f0"></div>
<div class="t" style="left:999px;top:171px;font-size:11px;line-height:11px;color:#000;font-weight:normal;font-family:'Liberation Sans';">Елемент</div>
<div class="t" style="left:999px;top:195px;font-size:11px;line-height:11px;color:#000;font-weight:normal;font-family:'Liberation Sans';">Переріз</div>
<div class="a" style="left:1050px;top:166px;width:44px;height:21px;background:#e1e1e1;border:1px solid #adadad;box-sizing:border-box;overflow:hidden"><div class="a" style="left:0;top:0;width:26px;height:19px;overflow:hidden"><div class="t" style="left:3px;top:4px;font-size:11.3px;line-height:12px;color:#000">1</div></div></div>
<svg style="left:1081px;top:174px" width="9" height="5"><path d="M0.5 0.5 L4.5 4.5 L8.5 0.5" fill="none" stroke="#333" stroke-width="1"/></svg>
<div class="a" style="left:1050px;top:189px;width:44px;height:21px;background:#e1e1e1;border:1px solid #adadad;box-sizing:border-box;overflow:hidden"><div class="a" style="left:0;top:0;width:26px;height:19px;overflow:hidden"><div class="t" style="left:3px;top:4px;font-size:11.3px;line-height:12px;color:#000">1</div></div></div>
<svg style="left:1081px;top:197px" width="9" height="5"><path d="M0.5 0.5 L4.5 4.5 L8.5 0.5" fill="none" stroke="#333" stroke-width="1"/></svg>
<div class="a" style="left:1110px;top:166px;width:140px;height:21px;background:#cccccc;border:1px solid #bfbfbf;box-sizing:border-box;overflow:hidden"><div class="a" style="left:0;top:0;width:122px;height:19px;overflow:hidden"><div class="t" style="left:3px;top:4px;font-size:11.3px;line-height:12px;color:#838383">Симетричне армування  </div></div></div>
<svg style="left:1237px;top:174px" width="9" height="5"><path d="M0.5 0.5 L4.5 4.5 L8.5 0.5" fill="none" stroke="#b4b4b4" stroke-width="1"/></svg>
<div class="a" style="left:1111px;top:197px;width:135px;height:3px;background:#e7eaea;border:1px solid #d6d6d6;box-sizing:border-box"></div>
<div class="a" style="left:1111px;top:192px;width:6px;height:13px;background:#0078d7"></div>
<div class="a" style="left:1265px;top:170px;width:13px;height:13px;background:#fff;border:1px solid #333;box-sizing:border-box"></div>
<svg style="left:1266px;top:171px" width="11" height="11"><path d="M1.5 5.5 L4.2 8.5 L9.5 2" fill="none" stroke="#222" stroke-width="1.2"/></svg>
<div class="a" style="left:1281px;top:166px;width:146px;height:40px;overflow:hidden">
<div class="t" style="left:0px;top:5px;font-size:11px;line-height:11px;color:#000;font-weight:normal;font-family:'Liberation Sans';">Показувати Площу/Діаметри</div>
<div class="t" style="left:0px;top:26px;font-size:11px;line-height:11px;color:#838383;font-weight:normal;font-family:'Liberation Sans';">Інформація про арматурні стрижні</div>
</div>
<div class="a" style="left:1265px;top:191px;width:13px;height:13px;background:#fff;border:1px solid #bcbcbc;box-sizing:border-box"></div>
<div class="a" style="left:992px;top:223px;width:436px;height:322px;background:#fff;border:1px solid #000;border-bottom-width:2px;box-sizing:border-box"></div>
<div class="a" style="left:990px;top:545px;width:439px;height:1px;background:#8a8a8a"></div>
<div class="t" style="left:995px;top:226px;font-size:11px;line-height:11px;color:#000;font-weight:normal;font-family:'Liberation Sans';letter-spacing:-0.12px;">Елем. 1 (80) Пер. 1;  B=40.0; H=50.0 см</div>
<div class="a" style="left:1101px;top:255px;width:215px;height:263px;background:#c0c0c0;border:2px solid #000;box-sizing:border-box"></div>
<div class="t" style="left:1102px;top:244px;font-size:11px;line-height:11px;color:#8b0000;font-weight:normal;font-family:'Liberation Sans';">d22</div>
<div class="t" style="left:1102px;top:519px;font-size:11px;line-height:11px;color:#8b0000;font-weight:normal;font-family:'Liberation Sans';">d22</div>
<div class="t" style="left:1168px;top:244px;font-size:11px;line-height:11px;color:#8b0000;font-weight:normal;font-family:'Liberation Sans';">d9.8</div>
<div class="t" style="left:1168px;top:519px;font-size:11px;line-height:11px;color:#8b0000;font-weight:normal;font-family:'Liberation Sans';">d9.8</div>
<div class="t" style="left:1226px;top:244px;font-size:11px;line-height:11px;color:#8b0000;font-weight:normal;font-family:'Liberation Sans';">d9.8</div>
<div class="t" style="left:1226px;top:519px;font-size:11px;line-height:11px;color:#8b0000;font-weight:normal;font-family:'Liberation Sans';">d9.8</div>
<div class="t" style="left:1296px;top:244px;font-size:11px;line-height:11px;color:#8b0000;font-weight:normal;font-family:'Liberation Sans';">d22</div>
<div class="t" style="left:1296px;top:519px;font-size:11px;line-height:11px;color:#8b0000;font-weight:normal;font-family:'Liberation Sans';">d22</div>
<div class="t" style="left:1071px;top:338px;font-size:11px;line-height:11px;color:#8b0000;font-weight:normal;font-family:'Liberation Sans';">d19.0</div>
<div class="t" style="left:1319px;top:338px;font-size:11px;line-height:11px;color:#8b0000;font-weight:normal;font-family:'Liberation Sans';">d19.0</div>
<div class="t" style="left:1071px;top:426px;font-size:11px;line-height:11px;color:#8b0000;font-weight:normal;font-family:'Liberation Sans';">d19.0</div>
<div class="t" style="left:1319px;top:426px;font-size:11px;line-height:11px;color:#8b0000;font-weight:normal;font-family:'Liberation Sans';">d19.0</div>
<div class="a" style="left:1115px;top:271px;width:9px;height:9px;border:2px solid #000;box-sizing:border-box"></div>
<div class="a" style="left:1115px;top:493px;width:9px;height:9px;border:2px solid #000;box-sizing:border-box"></div>
<div class="a" style="left:1116px;top:343px;width:7px;height:13px;border:2px solid #000;box-sizing:border-box"></div>
<div class="a" style="left:1116px;top:417px;width:7px;height:13px;border:2px solid #000;box-sizing:border-box"></div>
<div class="a" style="left:1291px;top:271px;width:9px;height:9px;border:2px solid #000;box-sizing:border-box"></div>
<div class="a" style="left:1291px;top:493px;width:9px;height:9px;border:2px solid #000;box-sizing:border-box"></div>
<div class="a" style="left:1292px;top:343px;width:7px;height:13px;border:2px solid #000;box-sizing:border-box"></div>
<div class="a" style="left:1292px;top:417px;width:7px;height:13px;border:2px solid #000;box-sizing:border-box"></div>
<div class="a" style="left:1176px;top:274px;width:5px;height:3px;background:#000"></div>
<div class="a" style="left:1176px;top:496px;width:5px;height:3px;background:#000"></div>
<div class="a" style="left:1234px;top:274px;width:5px;height:3px;background:#000"></div>
<div class="a" style="left:1234px;top:496px;width:5px;height:3px;background:#000"></div>
<div class="a" style="left:1208px;top:334px;width:1px;height:55px;background:#ff0000"></div>
<div class="a" style="left:1167px;top:388px;width:42px;height:1px;background:#0000ff"></div>
</body></html>
